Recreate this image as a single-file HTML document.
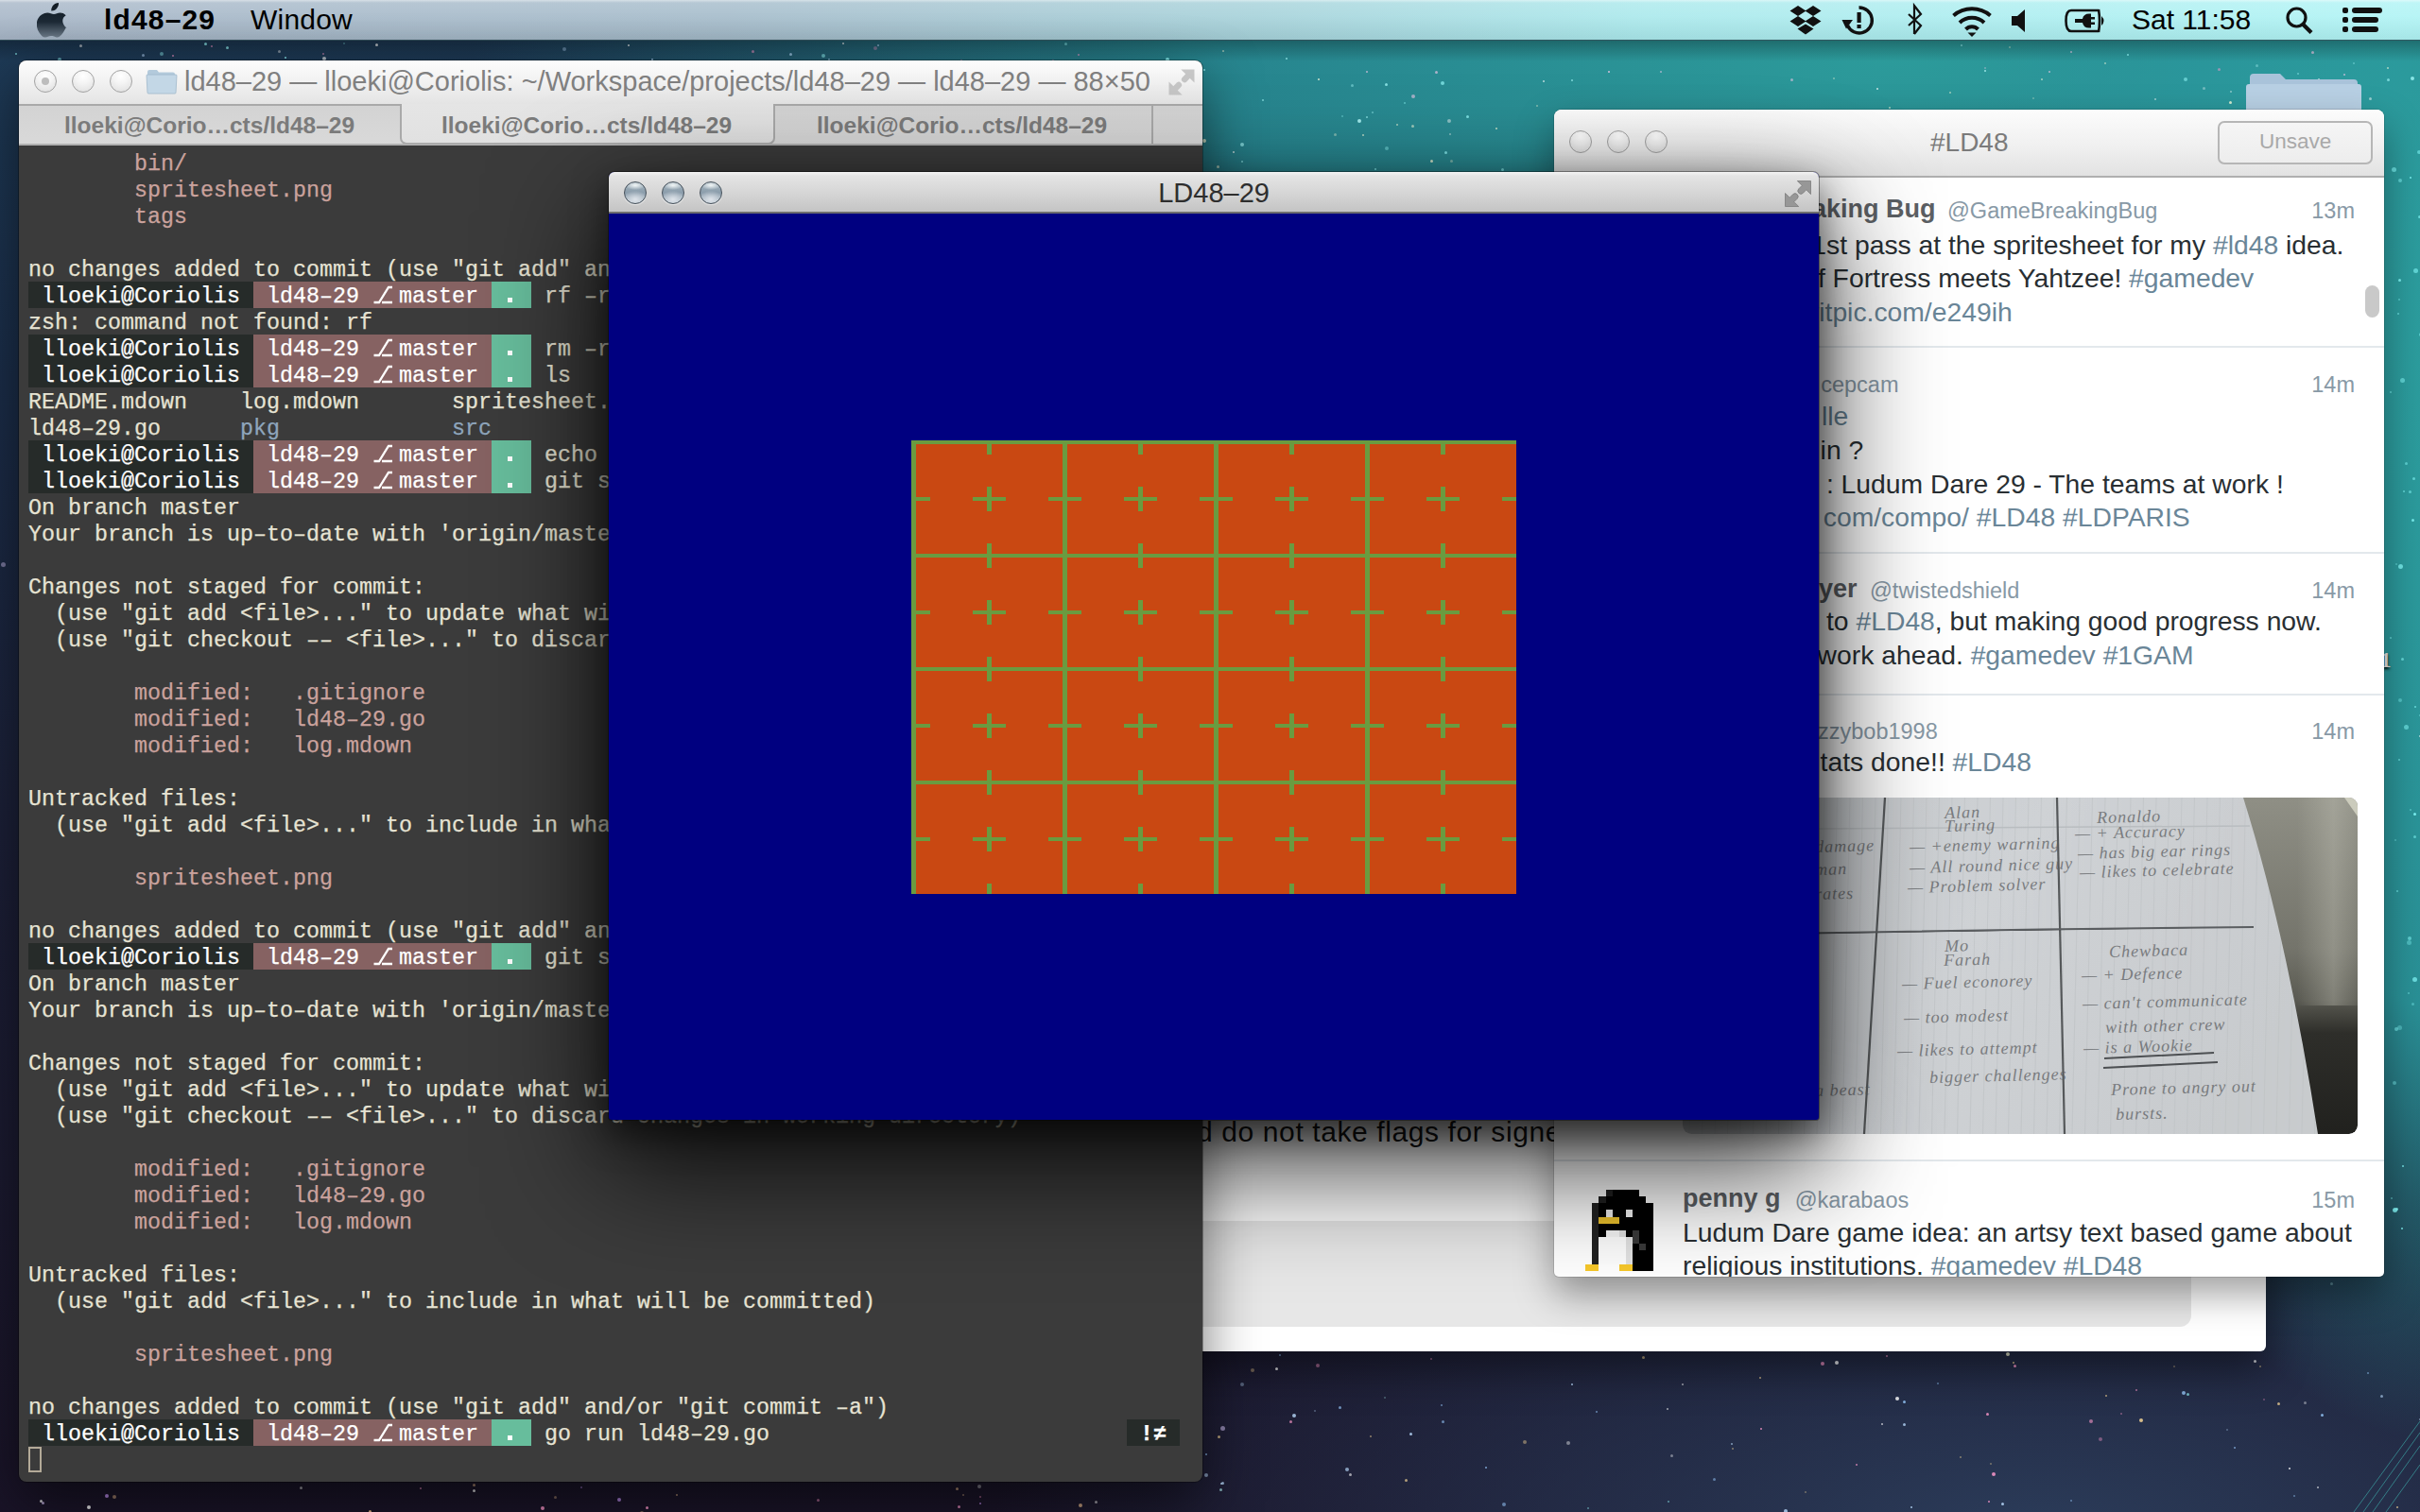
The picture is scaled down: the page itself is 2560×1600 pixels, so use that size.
<!DOCTYPE html><html><head><meta charset="utf-8"><style>
*{margin:0;padding:0;box-sizing:border-box}
html,body{width:2560px;height:1600px;overflow:hidden;background:#1b1a2c}
body{position:relative;font-family:"Liberation Sans",sans-serif}
.abs{position:absolute}
.t{position:absolute;white-space:nowrap;line-height:1}
#desk{position:absolute;left:0;top:0;width:2560px;height:1600px;
 background:
  radial-gradient(ellipse 520px 1150px at 2600px 380px, rgba(44,158,158,1) 0%, rgba(42,150,155,0.95) 60%, rgba(35,110,130,0) 100%),
  radial-gradient(ellipse 1100px 380px at 2150px 1620px, rgba(44,62,92,0.95) 0%, rgba(40,55,85,0.6) 50%, rgba(35,45,75,0) 100%),
  radial-gradient(ellipse 1500px 420px at 2000px 60px, rgba(44,155,155,1) 0%, rgba(40,140,148,0.9) 50%, rgba(32,100,120,0) 100%),
  linear-gradient(180deg, #1e3c58 0%, #1b2e4a 25%, #1c2038 55%, #1a1428 100%);
}
#menubar{position:absolute;left:0;top:0;width:2560px;height:43px;
 background:linear-gradient(90deg,#a8b7c8 0%,#a5bccb 30%,#a6d2da 52%,#aae9ec 68%,#b0f4f5 100%);
 border-bottom:1px solid rgba(10,40,50,0.75)}
#menubar .hl{position:absolute;left:0;top:0;width:100%;height:42px;background:linear-gradient(180deg,rgba(255,255,255,0.55) 0px,rgba(255,255,255,0.18) 3px,rgba(255,255,255,0.1) 40%,rgba(0,0,0,0.06) 100%)}
.win{position:absolute;overflow:hidden}
.tl{position:absolute;width:24px;height:24px;border-radius:50%;
 background:radial-gradient(circle at 50% 25%, #ffffff 0%, #f4f4f4 40%, #dcdcdc 100%);
 border:1.5px solid #a2a2a2}
.term{font-family:"Liberation Mono",monospace;font-size:23.33px;color:#e6e3d3;-webkit-text-stroke:0.25px currentColor}
.row{position:absolute;left:10px;height:28px;line-height:28px;white-space:pre}
.pk{color:#caa29d}
.bl{color:#8fa6bd}
.wh{color:#fff}
.nm{font-weight:bold;color:#5c6064}
.hd{color:#8899a6}
.lk{color:#6a8698}
.sep{position:absolute;height:2px;background:#e3e8ec}
</style></head><body>
<div id="desk"></div>
<div><div class="abs" style="left:1852px;top:1189px;width:5.0px;height:5.0px;border-radius:50%;background:#ffd;opacity:0.55"></div><div class="abs" style="left:2405px;top:431px;width:2px;height:2px;border-radius:50%;background:#dcf;opacity:0.56"></div><div class="abs" style="left:2514px;top:424px;width:2px;height:2px;border-radius:50%;background:#ffd;opacity:0.47"></div><div class="abs" style="left:371px;top:1146px;width:5.0px;height:5.0px;border-radius:50%;background:#f9c;opacity:0.65"></div><div class="abs" style="left:2438px;top:854px;width:3.0px;height:3.0px;border-radius:50%;background:#f9c;opacity:0.71"></div><div class="abs" style="left:645px;top:1319px;width:2px;height:2px;border-radius:50%;background:#dcf;opacity:0.33"></div><div class="abs" style="left:146px;top:432px;width:2px;height:2px;border-radius:50%;background:#dcf;opacity:0.32"></div><div class="abs" style="left:1900px;top:711px;width:3.0px;height:3.0px;border-radius:50%;background:#dcf;opacity:0.76"></div><div class="abs" style="left:2126px;top:521px;width:4px;height:4px;border-radius:50%;background:#fff;opacity:0.57"></div><div class="abs" style="left:348px;top:979px;width:4px;height:4px;border-radius:50%;background:#fff;opacity:0.52"></div><div class="abs" style="left:2257px;top:213px;width:4px;height:4px;border-radius:50%;background:#fff;opacity:0.47"></div><div class="abs" style="left:940px;top:1093px;width:2px;height:2px;border-radius:50%;background:#bff;opacity:0.34"></div><div class="abs" style="left:442px;top:863px;width:2px;height:2px;border-radius:50%;background:#fff;opacity:0.51"></div><div class="abs" style="left:69px;top:1445px;width:2px;height:2px;border-radius:50%;background:#9ff;opacity:0.42"></div><div class="abs" style="left:214px;top:1005px;width:3.0px;height:3.0px;border-radius:50%;background:#f9c;opacity:0.52"></div><div class="abs" style="left:299px;top:1202px;width:4px;height:4px;border-radius:50%;background:#9ff;opacity:0.73"></div><div class="abs" style="left:1105px;top:732px;width:2px;height:2px;border-radius:50%;background:#fff;opacity:0.48"></div><div class="abs" style="left:1679px;top:1595px;width:2px;height:2px;border-radius:50%;background:#9ff;opacity:0.44"></div><div class="abs" style="left:413px;top:65px;width:2px;height:2px;border-radius:50%;background:#ffd;opacity:0.74"></div><div class="abs" style="left:727px;top:1439px;width:3.0px;height:3.0px;border-radius:50%;background:#9ff;opacity:0.55"></div><div class="abs" style="left:781px;top:1541px;width:5.0px;height:5.0px;border-radius:50%;background:#9ff;opacity:0.53"></div><div class="abs" style="left:1571px;top:281px;width:3.0px;height:3.0px;border-radius:50%;background:#ffd;opacity:0.84"></div><div class="abs" style="left:1px;top:595px;width:5.0px;height:5.0px;border-radius:50%;background:#dcf;opacity:0.47"></div><div class="abs" style="left:80px;top:474px;width:2px;height:2px;border-radius:50%;background:#ffd;opacity:0.85"></div><div class="abs" style="left:2465px;top:1357px;width:3.0px;height:3.0px;border-radius:50%;background:#bff;opacity:0.32"></div><div class="abs" style="left:599px;top:479px;width:3.0px;height:3.0px;border-radius:50%;background:#fff;opacity:0.31"></div><div class="abs" style="left:2499px;top:716px;width:5.0px;height:5.0px;border-radius:50%;background:#fff;opacity:0.51"></div><div class="abs" style="left:304px;top:227px;width:2px;height:2px;border-radius:50%;background:#dcf;opacity:0.65"></div><div class="abs" style="left:63px;top:1274px;width:2px;height:2px;border-radius:50%;background:#fff;opacity:0.64"></div><div class="abs" style="left:521px;top:1245px;width:3.0px;height:3.0px;border-radius:50%;background:#dcf;opacity:0.37"></div><div class="abs" style="left:1581px;top:417px;width:4px;height:4px;border-radius:50%;background:#9ff;opacity:0.47"></div><div class="abs" style="left:935px;top:1293px;width:2px;height:2px;border-radius:50%;background:#f9c;opacity:0.40"></div><div class="abs" style="left:2268px;top:445px;width:4px;height:4px;border-radius:50%;background:#ffd;opacity:0.79"></div><div class="abs" style="left:2472px;top:203px;width:3.0px;height:3.0px;border-radius:50%;background:#bff;opacity:0.36"></div><div class="abs" style="left:158px;top:1092px;width:2px;height:2px;border-radius:50%;background:#9ff;opacity:0.71"></div><div class="abs" style="left:1604px;top:569px;width:3.0px;height:3.0px;border-radius:50%;background:#dcf;opacity:0.57"></div><div class="abs" style="left:2130px;top:402px;width:4px;height:4px;border-radius:50%;background:#bff;opacity:0.37"></div><div class="abs" style="left:1963px;top:1188px;width:4px;height:4px;border-radius:50%;background:#dcf;opacity:0.64"></div><div class="abs" style="left:1147px;top:477px;width:2px;height:2px;border-radius:50%;background:#f9c;opacity:0.31"></div><div class="abs" style="left:1102px;top:885px;width:3.0px;height:3.0px;border-radius:50%;background:#9ff;opacity:0.33"></div><div class="abs" style="left:721px;top:620px;width:2px;height:2px;border-radius:50%;background:#dcf;opacity:0.61"></div><div class="abs" style="left:538px;top:231px;width:2px;height:2px;border-radius:50%;background:#9ff;opacity:0.79"></div><div class="abs" style="left:1355px;top:1388px;width:4px;height:4px;border-radius:50%;background:#f9c;opacity:0.59"></div><div class="abs" style="left:574px;top:1251px;width:2px;height:2px;border-radius:50%;background:#bff;opacity:0.56"></div><div class="abs" style="left:1464px;top:1478px;width:2px;height:2px;border-radius:50%;background:#bff;opacity:0.31"></div><div class="abs" style="left:306px;top:1030px;width:2px;height:2px;border-radius:50%;background:#f9c;opacity:0.47"></div><div class="abs" style="left:559px;top:191px;width:2px;height:2px;border-radius:50%;background:#ffd;opacity:0.60"></div><div class="abs" style="left:182px;top:1552px;width:4px;height:4px;border-radius:50%;background:#f9c;opacity:0.37"></div><div class="abs" style="left:1399px;top:763px;width:2px;height:2px;border-radius:50%;background:#f9c;opacity:0.56"></div><div class="abs" style="left:318px;top:897px;width:5.0px;height:5.0px;border-radius:50%;background:#bff;opacity:0.77"></div><div class="abs" style="left:2346px;top:72px;width:3.0px;height:3.0px;border-radius:50%;background:#f9c;opacity:0.51"></div><div class="abs" style="left:2386px;top:68px;width:3.0px;height:3.0px;border-radius:50%;background:#bff;opacity:0.34"></div><div class="abs" style="left:473px;top:569px;width:3.0px;height:3.0px;border-radius:50%;background:#f9c;opacity:0.48"></div><div class="abs" style="left:2379px;top:980px;width:3.0px;height:3.0px;border-radius:50%;background:#ffd;opacity:0.76"></div><div class="abs" style="left:343px;top:1105px;width:5.0px;height:5.0px;border-radius:50%;background:#dcf;opacity:0.32"></div><div class="abs" style="left:2462px;top:222px;width:3.0px;height:3.0px;border-radius:50%;background:#bff;opacity:0.43"></div><div class="abs" style="left:462px;top:1061px;width:5.0px;height:5.0px;border-radius:50%;background:#dcf;opacity:0.66"></div><div class="abs" style="left:1991px;top:566px;width:2px;height:2px;border-radius:50%;background:#fff;opacity:0.47"></div><div class="abs" style="left:2505px;top:457px;width:3.0px;height:3.0px;border-radius:50%;background:#9ff;opacity:0.71"></div><div class="abs" style="left:1402px;top:1394px;width:3.0px;height:3.0px;border-radius:50%;background:#ffd;opacity:0.79"></div><div class="abs" style="left:1339px;top:871px;width:4px;height:4px;border-radius:50%;background:#fff;opacity:0.41"></div><div class="abs" style="left:1764px;top:1588px;width:2px;height:2px;border-radius:50%;background:#9ff;opacity:0.51"></div><div class="abs" style="left:2388px;top:691px;width:2px;height:2px;border-radius:50%;background:#9ff;opacity:0.37"></div><div class="abs" style="left:1436px;top:126px;width:4px;height:4px;border-radius:50%;background:#bff;opacity:0.82"></div><div class="abs" style="left:1133px;top:389px;width:2px;height:2px;border-radius:50%;background:#ffd;opacity:0.56"></div><div class="abs" style="left:876px;top:890px;width:3.0px;height:3.0px;border-radius:50%;background:#f9c;opacity:0.59"></div><div class="abs" style="left:1291px;top:1509px;width:5.0px;height:5.0px;border-radius:50%;background:#dcf;opacity:0.55"></div><div class="abs" style="left:305px;top:107px;width:2px;height:2px;border-radius:50%;background:#dcf;opacity:0.32"></div><div class="abs" style="left:1151px;top:1211px;width:2px;height:2px;border-radius:50%;background:#fff;opacity:0.66"></div><div class="abs" style="left:2310px;top:82px;width:4px;height:4px;border-radius:50%;background:#9ff;opacity:0.52"></div><div class="abs" style="left:777px;top:93px;width:5.0px;height:5.0px;border-radius:50%;background:#fff;opacity:0.43"></div><div class="abs" style="left:577px;top:139px;width:4px;height:4px;border-radius:50%;background:#bff;opacity:0.55"></div><div class="abs" style="left:2192px;top:1384px;width:4px;height:4px;border-radius:50%;background:#fff;opacity:0.83"></div><div class="abs" style="left:811px;top:451px;width:5.0px;height:5.0px;border-radius:50%;background:#ffd;opacity:0.44"></div><div class="abs" style="left:44px;top:1589px;width:3.0px;height:3.0px;border-radius:50%;background:#dcf;opacity:0.69"></div><div class="abs" style="left:733px;top:506px;width:2px;height:2px;border-radius:50%;background:#fff;opacity:0.60"></div><div class="abs" style="left:2131px;top:1067px;width:3.0px;height:3.0px;border-radius:50%;background:#9ff;opacity:0.52"></div><div class="abs" style="left:917px;top:221px;width:3.0px;height:3.0px;border-radius:50%;background:#f9c;opacity:0.51"></div><div class="abs" style="left:1845px;top:971px;width:2px;height:2px;border-radius:50%;background:#f9c;opacity:0.79"></div><div class="abs" style="left:27px;top:814px;width:3.0px;height:3.0px;border-radius:50%;background:#dcf;opacity:0.66"></div><div class="abs" style="left:2058px;top:745px;width:3.0px;height:3.0px;border-radius:50%;background:#fff;opacity:0.66"></div><div class="abs" style="left:839px;top:245px;width:4px;height:4px;border-radius:50%;background:#f9c;opacity:0.81"></div><div class="abs" style="left:505px;top:479px;width:2px;height:2px;border-radius:50%;background:#ffd;opacity:0.84"></div><div class="abs" style="left:1269px;top:1142px;width:5.0px;height:5.0px;border-radius:50%;background:#fff;opacity:0.44"></div><div class="abs" style="left:64px;top:756px;width:3.0px;height:3.0px;border-radius:50%;background:#bff;opacity:0.32"></div><div class="abs" style="left:1401px;top:1170px;width:3.0px;height:3.0px;border-radius:50%;background:#fff;opacity:0.57"></div><div class="abs" style="left:116px;top:490px;width:5.0px;height:5.0px;border-radius:50%;background:#bff;opacity:0.54"></div><div class="abs" style="left:143px;top:397px;width:3.0px;height:3.0px;border-radius:50%;background:#fff;opacity:0.68"></div><div class="abs" style="left:575px;top:1006px;width:2px;height:2px;border-radius:50%;background:#dcf;opacity:0.80"></div><div class="abs" style="left:2122px;top:1431px;width:4px;height:4px;border-radius:50%;background:#ffd;opacity:0.82"></div><div class="abs" style="left:2017px;top:1228px;width:4px;height:4px;border-radius:50%;background:#bff;opacity:0.72"></div><div class="abs" style="left:1799px;top:1121px;width:3.0px;height:3.0px;border-radius:50%;background:#fff;opacity:0.76"></div><div class="abs" style="left:2300px;top:1351px;width:2px;height:2px;border-radius:50%;background:#dcf;opacity:0.58"></div><div class="abs" style="left:2293px;top:568px;width:2px;height:2px;border-radius:50%;background:#f9c;opacity:0.51"></div><div class="abs" style="left:2496px;top:469px;width:2px;height:2px;border-radius:50%;background:#9ff;opacity:0.83"></div><div class="abs" style="left:2147px;top:602px;width:3.0px;height:3.0px;border-radius:50%;background:#ffd;opacity:0.41"></div><div class="abs" style="left:2195px;top:277px;width:3.0px;height:3.0px;border-radius:50%;background:#bff;opacity:0.63"></div><div class="abs" style="left:113px;top:1145px;width:2px;height:2px;border-radius:50%;background:#dcf;opacity:0.80"></div><div class="abs" style="left:2228px;top:1195px;width:2px;height:2px;border-radius:50%;background:#ffd;opacity:0.35"></div><div class="abs" style="left:683px;top:177px;width:3.0px;height:3.0px;border-radius:50%;background:#ffd;opacity:0.53"></div><div class="abs" style="left:1655px;top:594px;width:2px;height:2px;border-radius:50%;background:#ffd;opacity:0.57"></div><div class="abs" style="left:1391px;top:931px;width:5.0px;height:5.0px;border-radius:50%;background:#ffd;opacity:0.59"></div><div class="abs" style="left:444px;top:435px;width:3.0px;height:3.0px;border-radius:50%;background:#dcf;opacity:0.32"></div><div class="abs" style="left:1065px;top:308px;width:4px;height:4px;border-radius:50%;background:#bff;opacity:0.32"></div><div class="abs" style="left:637px;top:508px;width:2px;height:2px;border-radius:50%;background:#f9c;opacity:0.46"></div><div class="abs" style="left:1455px;top:543px;width:3.0px;height:3.0px;border-radius:50%;background:#ffd;opacity:0.36"></div><div class="abs" style="left:2384px;top:294px;width:5.0px;height:5.0px;border-radius:50%;background:#dcf;opacity:0.64"></div><div class="abs" style="left:809px;top:1479px;width:3.0px;height:3.0px;border-radius:50%;background:#ffd;opacity:0.31"></div><div class="abs" style="left:1693px;top:1127px;width:3.0px;height:3.0px;border-radius:50%;background:#9ff;opacity:0.60"></div><div class="abs" style="left:2187px;top:1350px;width:2px;height:2px;border-radius:50%;background:#dcf;opacity:0.42"></div><div class="abs" style="left:2223px;top:1295px;width:3.0px;height:3.0px;border-radius:50%;background:#9ff;opacity:0.43"></div><div class="abs" style="left:1423px;top:413px;width:2px;height:2px;border-radius:50%;background:#dcf;opacity:0.47"></div><div class="abs" style="left:797px;top:489px;width:5.0px;height:5.0px;border-radius:50%;background:#9ff;opacity:0.79"></div><div class="abs" style="left:548px;top:533px;width:2px;height:2px;border-radius:50%;background:#f9c;opacity:0.35"></div><div class="abs" style="left:1588px;top:241px;width:3.0px;height:3.0px;border-radius:50%;background:#ffd;opacity:0.60"></div><div class="abs" style="left:516px;top:453px;width:3.0px;height:3.0px;border-radius:50%;background:#f9c;opacity:0.68"></div><div class="abs" style="left:72px;top:239px;width:2px;height:2px;border-radius:50%;background:#dcf;opacity:0.68"></div><div class="abs" style="left:1479px;top:279px;width:4px;height:4px;border-radius:50%;background:#dcf;opacity:0.65"></div><div class="abs" style="left:1406px;top:1072px;width:4px;height:4px;border-radius:50%;background:#9ff;opacity:0.74"></div><div class="abs" style="left:1974px;top:260px;width:2px;height:2px;border-radius:50%;background:#bff;opacity:0.72"></div><div class="abs" style="left:2512px;top:1097px;width:3.0px;height:3.0px;border-radius:50%;background:#ffd;opacity:0.38"></div><div class="abs" style="left:755px;top:278px;width:2px;height:2px;border-radius:50%;background:#9ff;opacity:0.76"></div><div class="abs" style="left:1159px;top:1421px;width:2px;height:2px;border-radius:50%;background:#dcf;opacity:0.33"></div><div class="abs" style="left:1892px;top:201px;width:5.0px;height:5.0px;border-radius:50%;background:#bff;opacity:0.48"></div><div class="abs" style="left:1912px;top:916px;width:3.0px;height:3.0px;border-radius:50%;background:#fff;opacity:0.54"></div><div class="abs" style="left:2461px;top:807px;width:2px;height:2px;border-radius:50%;background:#f9c;opacity:0.69"></div><div class="abs" style="left:820px;top:414px;width:3.0px;height:3.0px;border-radius:50%;background:#ffd;opacity:0.50"></div><div class="abs" style="left:1516px;top:873px;width:2px;height:2px;border-radius:50%;background:#dcf;opacity:0.39"></div><div class="abs" style="left:2099px;top:74px;width:2px;height:2px;border-radius:50%;background:#bff;opacity:0.74"></div><div class="abs" style="left:1656px;top:1209px;width:3.0px;height:3.0px;border-radius:50%;background:#9ff;opacity:0.58"></div><div class="abs" style="left:1396px;top:571px;width:2px;height:2px;border-radius:50%;background:#bff;opacity:0.71"></div><div class="abs" style="left:655px;top:873px;width:2px;height:2px;border-radius:50%;background:#fff;opacity:0.78"></div><div class="abs" style="left:1514px;top:927px;width:5.0px;height:5.0px;border-radius:50%;background:#9ff;opacity:0.52"></div><div class="abs" style="left:757px;top:187px;width:5.0px;height:5.0px;border-radius:50%;background:#fff;opacity:0.47"></div><div class="abs" style="left:413px;top:64px;width:2px;height:2px;border-radius:50%;background:#f9c;opacity:0.80"></div><div class="abs" style="left:203px;top:518px;width:2px;height:2px;border-radius:50%;background:#f9c;opacity:0.46"></div><div class="abs" style="left:884px;top:1394px;width:3.0px;height:3.0px;border-radius:50%;background:#dcf;opacity:0.40"></div><div class="abs" style="left:314px;top:840px;width:3.0px;height:3.0px;border-radius:50%;background:#ffd;opacity:0.65"></div><div class="abs" style="left:489px;top:852px;width:3.0px;height:3.0px;border-radius:50%;background:#bff;opacity:0.36"></div><div class="abs" style="left:442px;top:1556px;width:2px;height:2px;border-radius:50%;background:#fff;opacity:0.54"></div><div class="abs" style="left:2067px;top:146px;width:5.0px;height:5.0px;border-radius:50%;background:#9ff;opacity:0.66"></div><div class="abs" style="left:44px;top:244px;width:2px;height:2px;border-radius:50%;background:#fff;opacity:0.45"></div><div class="abs" style="left:1396px;top:1169px;width:3.0px;height:3.0px;border-radius:50%;background:#dcf;opacity:0.53"></div><div class="abs" style="left:2132px;top:1206px;width:5.0px;height:5.0px;border-radius:50%;background:#bff;opacity:0.65"></div><div class="abs" style="left:312px;top:1168px;width:3.0px;height:3.0px;border-radius:50%;background:#f9c;opacity:0.72"></div><div class="abs" style="left:184px;top:834px;width:2px;height:2px;border-radius:50%;background:#ffd;opacity:0.56"></div><div class="abs" style="left:692px;top:1057px;width:3.0px;height:3.0px;border-radius:50%;background:#dcf;opacity:0.63"></div><div class="abs" style="left:1759px;top:1055px;width:3.0px;height:3.0px;border-radius:50%;background:#fff;opacity:0.59"></div><div class="abs" style="left:2448px;top:682px;width:2px;height:2px;border-radius:50%;background:#dcf;opacity:0.46"></div><div class="abs" style="left:1104px;top:1191px;width:2px;height:2px;border-radius:50%;background:#f9c;opacity:0.69"></div><div class="abs" style="left:1212px;top:98px;width:2px;height:2px;border-radius:50%;background:#9ff;opacity:0.62"></div><div class="abs" style="left:641px;top:880px;width:5.0px;height:5.0px;border-radius:50%;background:#f9c;opacity:0.51"></div><div class="abs" style="left:1290px;top:1575px;width:3.0px;height:3.0px;border-radius:50%;background:#bff;opacity:0.62"></div><div class="abs" style="left:1307px;top:193px;width:5.0px;height:5.0px;border-radius:50%;background:#9ff;opacity:0.54"></div><div class="abs" style="left:1956px;top:556px;width:5.0px;height:5.0px;border-radius:50%;background:#9ff;opacity:0.32"></div><div class="abs" style="left:403px;top:1523px;width:3.0px;height:3.0px;border-radius:50%;background:#9ff;opacity:0.84"></div><div class="abs" style="left:1004px;top:1279px;width:4px;height:4px;border-radius:50%;background:#bff;opacity:0.33"></div><div class="abs" style="left:1708px;top:976px;width:2px;height:2px;border-radius:50%;background:#9ff;opacity:0.77"></div><div class="abs" style="left:1461px;top:1124px;width:2px;height:2px;border-radius:50%;background:#bff;opacity:0.50"></div><div class="abs" style="left:572px;top:1410px;width:3.0px;height:3.0px;border-radius:50%;background:#ffd;opacity:0.63"></div><div class="abs" style="left:2384px;top:1439px;width:3.0px;height:3.0px;border-radius:50%;background:#fff;opacity:0.73"></div><div class="abs" style="left:2174px;top:323px;width:2px;height:2px;border-radius:50%;background:#f9c;opacity:0.37"></div><div class="abs" style="left:1970px;top:276px;width:3.0px;height:3.0px;border-radius:50%;background:#fff;opacity:0.73"></div><div class="abs" style="left:2559px;top:778px;width:2px;height:2px;border-radius:50%;background:#fff;opacity:0.64"></div><div class="abs" style="left:2313px;top:1474px;width:3.0px;height:3.0px;border-radius:50%;background:#9ff;opacity:0.65"></div><div class="abs" style="left:980px;top:431px;width:2px;height:2px;border-radius:50%;background:#dcf;opacity:0.84"></div><div class="abs" style="left:802px;top:1442px;width:2px;height:2px;border-radius:50%;background:#f9c;opacity:0.33"></div><div class="abs" style="left:1109px;top:574px;width:3.0px;height:3.0px;border-radius:50%;background:#bff;opacity:0.64"></div><div class="abs" style="left:419px;top:498px;width:3.0px;height:3.0px;border-radius:50%;background:#fff;opacity:0.34"></div><div class="abs" style="left:354px;top:1428px;width:2px;height:2px;border-radius:50%;background:#dcf;opacity:0.43"></div><div class="abs" style="left:1528px;top:1034px;width:3.0px;height:3.0px;border-radius:50%;background:#fff;opacity:0.42"></div><div class="abs" style="left:1407px;top:1055px;width:4px;height:4px;border-radius:50%;background:#9ff;opacity:0.76"></div><div class="abs" style="left:304px;top:288px;width:3.0px;height:3.0px;border-radius:50%;background:#dcf;opacity:0.76"></div><div class="abs" style="left:873px;top:953px;width:3.0px;height:3.0px;border-radius:50%;background:#f9c;opacity:0.44"></div><div class="abs" style="left:617px;top:798px;width:2px;height:2px;border-radius:50%;background:#f9c;opacity:0.76"></div><div class="abs" style="left:2443px;top:709px;width:2px;height:2px;border-radius:50%;background:#dcf;opacity:0.72"></div><div class="abs" style="left:753px;top:918px;width:4px;height:4px;border-radius:50%;background:#fff;opacity:0.62"></div><div class="abs" style="left:1892px;top:706px;width:2px;height:2px;border-radius:50%;background:#dcf;opacity:0.35"></div><div class="abs" style="left:2311px;top:1206px;width:3.0px;height:3.0px;border-radius:50%;background:#f9c;opacity:0.55"></div><div class="abs" style="left:38px;top:198px;width:2px;height:2px;border-radius:50%;background:#9ff;opacity:0.80"></div><div class="abs" style="left:2472px;top:210px;width:4px;height:4px;border-radius:50%;background:#fff;opacity:0.57"></div><div class="abs" style="left:1343px;top:622px;width:2px;height:2px;border-radius:50%;background:#9ff;opacity:0.50"></div><div class="abs" style="left:1339px;top:793px;width:2px;height:2px;border-radius:50%;background:#fff;opacity:0.69"></div><div class="abs" style="left:2331px;top:1261px;width:4px;height:4px;border-radius:50%;background:#fff;opacity:0.54"></div><div class="abs" style="left:1248px;top:981px;width:2px;height:2px;border-radius:50%;background:#9ff;opacity:0.52"></div><div class="abs" style="left:2114px;top:551px;width:2px;height:2px;border-radius:50%;background:#fff;opacity:0.76"></div><div class="abs" style="left:98px;top:787px;width:4px;height:4px;border-radius:50%;background:#ffd;opacity:0.62"></div><div class="abs" style="left:798px;top:1556px;width:3.0px;height:3.0px;border-radius:50%;background:#fff;opacity:0.74"></div><div class="abs" style="left:2214px;top:360px;width:5.0px;height:5.0px;border-radius:50%;background:#dcf;opacity:0.61"></div><div class="abs" style="left:723px;top:226px;width:5.0px;height:5.0px;border-radius:50%;background:#ffd;opacity:0.78"></div><div class="abs" style="left:1152px;top:88px;width:2px;height:2px;border-radius:50%;background:#dcf;opacity:0.33"></div><div class="abs" style="left:649px;top:1205px;width:2px;height:2px;border-radius:50%;background:#bff;opacity:0.66"></div><div class="abs" style="left:1731px;top:174px;width:3.0px;height:3.0px;border-radius:50%;background:#dcf;opacity:0.47"></div><div class="abs" style="left:2234px;top:215px;width:2px;height:2px;border-radius:50%;background:#bff;opacity:0.45"></div><div class="abs" style="left:431px;top:685px;width:2px;height:2px;border-radius:50%;background:#bff;opacity:0.65"></div><div class="abs" style="left:589px;top:242px;width:4px;height:4px;border-radius:50%;background:#f9c;opacity:0.53"></div><div class="abs" style="left:902px;top:1044px;width:5.0px;height:5.0px;border-radius:50%;background:#dcf;opacity:0.49"></div><div class="abs" style="left:1880px;top:850px;width:2px;height:2px;border-radius:50%;background:#fff;opacity:0.74"></div><div class="abs" style="left:1363px;top:1420px;width:2px;height:2px;border-radius:50%;background:#ffd;opacity:0.57"></div><div class="abs" style="left:296px;top:1493px;width:3.0px;height:3.0px;border-radius:50%;background:#bff;opacity:0.53"></div></div>
<div><div class="abs" style="left:2546px;top:995px;width:5.0px;height:5.0px;border-radius:50%;background:#8ff;opacity:0.36"></div><div class="abs" style="left:2541px;top:1233px;width:2px;height:2px;border-radius:50%;background:#8ff;opacity:0.80"></div><div class="abs" style="left:2528px;top:674px;width:2px;height:2px;border-radius:50%;background:#8ff;opacity:0.54"></div><div class="abs" style="left:2528px;top:414px;width:2px;height:2px;border-radius:50%;background:#8ff;opacity:0.55"></div><div class="abs" style="left:2531px;top:1144px;width:4px;height:4px;border-radius:50%;background:#8ff;opacity:0.43"></div><div class="abs" style="left:2553px;top:284px;width:5.0px;height:5.0px;border-radius:50%;background:#8ff;opacity:0.57"></div><div class="abs" style="left:2529px;top:1267px;width:2px;height:2px;border-radius:50%;background:#8ff;opacity:0.45"></div><div class="abs" style="left:2532px;top:1279px;width:2px;height:2px;border-radius:50%;background:#8ff;opacity:0.49"></div><div class="abs" style="left:2559px;top:756px;width:2px;height:2px;border-radius:50%;background:#8ff;opacity:0.44"></div><div class="abs" style="left:2559px;top:352px;width:4px;height:4px;border-radius:50%;background:#8ff;opacity:0.50"></div><div class="abs" style="left:2537px;top:316px;width:2px;height:2px;border-radius:50%;background:#8ff;opacity:0.48"></div><div class="abs" style="left:2536px;top:1085px;width:5.0px;height:5.0px;border-radius:50%;background:#8ff;opacity:0.35"></div><div class="abs" style="left:2548px;top:519px;width:3.0px;height:3.0px;border-radius:50%;background:#8ff;opacity:0.53"></div><div class="abs" style="left:2535px;top:942px;width:2px;height:2px;border-radius:50%;background:#8ff;opacity:0.59"></div><div class="abs" style="left:2549px;top:187px;width:2px;height:2px;border-radius:50%;background:#8ff;opacity:0.82"></div><div class="abs" style="left:2537px;top:597px;width:5.0px;height:5.0px;border-radius:50%;background:#8ff;opacity:0.74"></div><div class="abs" style="left:2537px;top:803px;width:2px;height:2px;border-radius:50%;background:#8ff;opacity:0.58"></div><div class="abs" style="left:2549px;top:856px;width:2px;height:2px;border-radius:50%;background:#8ff;opacity:0.41"></div><div class="abs" style="left:2533px;top:1087px;width:4px;height:4px;border-radius:50%;background:#8ff;opacity:0.52"></div><div class="abs" style="left:2537px;top:739px;width:4px;height:4px;border-radius:50%;background:#8ff;opacity:0.40"></div><div class="abs" style="left:2551px;top:1061px;width:3.0px;height:3.0px;border-radius:50%;background:#8ff;opacity:0.37"></div><div class="abs" style="left:2558px;top:228px;width:3.0px;height:3.0px;border-radius:50%;background:#8ff;opacity:0.61"></div><div class="abs" style="left:2537px;top:295px;width:3.0px;height:3.0px;border-radius:50%;background:#8ff;opacity:0.81"></div><div class="abs" style="left:2544px;top:489px;width:3.0px;height:3.0px;border-radius:50%;background:#8ff;opacity:0.50"></div><div class="abs" style="left:2553px;top:860px;width:3.0px;height:3.0px;border-radius:50%;background:#8ff;opacity:0.85"></div><div class="abs" style="left:2530px;top:177px;width:5.0px;height:5.0px;border-radius:50%;background:#8ff;opacity:0.62"></div><div class="abs" style="left:2539px;top:400px;width:5.0px;height:5.0px;border-radius:50%;background:#8ff;opacity:0.52"></div><div class="abs" style="left:2533px;top:888px;width:2px;height:2px;border-radius:50%;background:#8ff;opacity:0.38"></div><div class="abs" style="left:2557px;top:159px;width:4px;height:4px;border-radius:50%;background:#8ff;opacity:0.52"></div><div class="abs" style="left:2531px;top:1278px;width:5.0px;height:5.0px;border-radius:50%;background:#8ff;opacity:0.82"></div><div class="abs" style="left:2547px;top:1050px;width:2px;height:2px;border-radius:50%;background:#8ff;opacity:0.43"></div><div class="abs" style="left:2537px;top:189px;width:4px;height:4px;border-radius:50%;background:#8ff;opacity:0.50"></div><div class="abs" style="left:2540px;top:1299px;width:2px;height:2px;border-radius:50%;background:#8ff;opacity:0.84"></div><div class="abs" style="left:2540px;top:696px;width:3.0px;height:3.0px;border-radius:50%;background:#8ff;opacity:0.59"></div><div class="abs" style="left:2534px;top:596px;width:2px;height:2px;border-radius:50%;background:#8ff;opacity:0.41"></div><div class="abs" style="left:2554px;top:747px;width:2px;height:2px;border-radius:50%;background:#8ff;opacity:0.66"></div><div class="abs" style="left:2542px;top:519px;width:2px;height:2px;border-radius:50%;background:#8ff;opacity:0.60"></div><div class="abs" style="left:2543px;top:767px;width:5.0px;height:5.0px;border-radius:50%;background:#8ff;opacity:0.53"></div><div class="abs" style="left:2552px;top:1034px;width:5.0px;height:5.0px;border-radius:50%;background:#8ff;opacity:0.68"></div><div class="abs" style="left:2551px;top:549px;width:3.0px;height:3.0px;border-radius:50%;background:#8ff;opacity:0.77"></div><div class="abs" style="left:2534px;top:1278px;width:3.0px;height:3.0px;border-radius:50%;background:#8ff;opacity:0.83"></div><div class="abs" style="left:2536px;top:331px;width:2px;height:2px;border-radius:50%;background:#8ff;opacity:0.59"></div><div class="abs" style="left:2552px;top:505px;width:3.0px;height:3.0px;border-radius:50%;background:#8ff;opacity:0.58"></div><div class="abs" style="left:2553px;top:884px;width:3.0px;height:3.0px;border-radius:50%;background:#8ff;opacity:0.52"></div><div class="abs" style="left:2547px;top:991px;width:4px;height:4px;border-radius:50%;background:#8ff;opacity:0.53"></div><div class="abs" style="left:2358px;top:107px;width:3.0px;height:3.0px;border-radius:50%;background:#ffd;opacity:0.79"></div><div class="abs" style="left:1939px;top:82px;width:2px;height:2px;border-radius:50%;background:#ffd;opacity:0.40"></div><div class="abs" style="left:2479px;top:78px;width:2px;height:2px;border-radius:50%;background:#fce;opacity:0.66"></div><div class="abs" style="left:1493px;top:100px;width:4px;height:4px;border-radius:50%;background:#fce;opacity:0.56"></div><div class="abs" style="left:1662px;top:84px;width:2px;height:2px;border-radius:50%;background:#aff;opacity:0.66"></div><div class="abs" style="left:1524px;top:86px;width:4px;height:4px;border-radius:50%;background:#9ff;opacity:0.63"></div><div class="abs" style="left:2250px;top:57px;width:2px;height:2px;border-radius:50%;background:#9ff;opacity:0.79"></div><div class="abs" style="left:1485px;top:108px;width:2px;height:2px;border-radius:50%;background:#9ff;opacity:0.46"></div><div class="abs" style="left:1894px;top:83px;width:3.0px;height:3.0px;border-radius:50%;background:#fce;opacity:0.53"></div><div class="abs" style="left:2125px;top:49px;width:2px;height:2px;border-radius:50%;background:#ffd;opacity:0.42"></div><div class="abs" style="left:1273px;top:73px;width:2px;height:2px;border-radius:50%;background:#aff;opacity:0.73"></div><div class="abs" style="left:2159px;top:83px;width:2px;height:2px;border-radius:50%;background:#ffd;opacity:0.57"></div><div class="abs" style="left:1394px;top:83px;width:2px;height:2px;border-radius:50%;background:#ffd;opacity:0.78"></div><div class="abs" style="left:2506px;top:103px;width:3.0px;height:3.0px;border-radius:50%;background:#fff;opacity:0.50"></div><div class="abs" style="left:2099px;top:71px;width:2px;height:2px;border-radius:50%;background:#fce;opacity:0.38"></div><div class="abs" style="left:1998px;top:113px;width:2px;height:2px;border-radius:50%;background:#ffd;opacity:0.60"></div><div class="abs" style="left:2330px;top:92px;width:3.0px;height:3.0px;border-radius:50%;background:#fff;opacity:0.35"></div><div class="abs" style="left:2452px;top:83px;width:2px;height:2px;border-radius:50%;background:#fff;opacity:0.61"></div><div class="abs" style="left:1756px;top:75px;width:2px;height:2px;border-radius:50%;background:#fce;opacity:0.55"></div><div class="abs" style="left:2525px;top:71px;width:2px;height:2px;border-radius:50%;background:#ffd;opacity:0.60"></div><div class="abs" style="left:2226px;top:66px;width:2px;height:2px;border-radius:50%;background:#ffd;opacity:0.51"></div><div class="abs" style="left:2489px;top:66px;width:2px;height:2px;border-radius:50%;background:#aff;opacity:0.37"></div><div class="abs" style="left:1429px;top:89px;width:3.0px;height:3.0px;border-radius:50%;background:#aff;opacity:0.42"></div><div class="abs" style="left:2279px;top:104px;width:2px;height:2px;border-radius:50%;background:#fff;opacity:0.54"></div><div class="abs" style="left:1625px;top:111px;width:2px;height:2px;border-radius:50%;background:#ffd;opacity:0.42"></div><div class="abs" style="left:2359px;top:96px;width:2px;height:2px;border-radius:50%;background:#fff;opacity:0.45"></div><div class="abs" style="left:2550px;top:81px;width:4px;height:4px;border-radius:50%;background:#aff;opacity:0.74"></div><div class="abs" style="left:1293px;top:53px;width:2px;height:2px;border-radius:50%;background:#ffd;opacity:0.57"></div><div class="abs" style="left:2062px;top:97px;width:2px;height:2px;border-radius:50%;background:#ffd;opacity:0.53"></div><div class="abs" style="left:2150px;top:103px;width:2px;height:2px;border-radius:50%;background:#ffd;opacity:0.32"></div><div class="abs" style="left:1985px;top:93px;width:2px;height:2px;border-radius:50%;background:#fff;opacity:0.74"></div><div class="abs" style="left:1518px;top:75px;width:3.0px;height:3.0px;border-radius:50%;background:#fce;opacity:0.60"></div><div class="abs" style="left:2378px;top:105px;width:3.0px;height:3.0px;border-radius:50%;background:#9ff;opacity:0.50"></div><div class="abs" style="left:2430px;top:77px;width:2px;height:2px;border-radius:50%;background:#aff;opacity:0.45"></div><div class="abs" style="left:2167px;top:75px;width:2px;height:2px;border-radius:50%;background:#fce;opacity:0.62"></div><div class="abs" style="left:2445px;top:54px;width:3.0px;height:3.0px;border-radius:50%;background:#fce;opacity:0.65"></div><div class="abs" style="left:2525px;top:83px;width:3.0px;height:3.0px;border-radius:50%;background:#aff;opacity:0.59"></div><div class="abs" style="left:1360px;top:61px;width:2px;height:2px;border-radius:50%;background:#aff;opacity:0.70"></div><div class="abs" style="left:1701px;top:75px;width:2px;height:2px;border-radius:50%;background:#fce;opacity:0.80"></div><div class="abs" style="left:1335px;top:105px;width:2px;height:2px;border-radius:50%;background:#aff;opacity:0.61"></div><div class="abs" style="left:2190px;top:54px;width:2px;height:2px;border-radius:50%;background:#fce;opacity:0.65"></div><div class="abs" style="left:1465px;top:88px;width:3.0px;height:3.0px;border-radius:50%;background:#aff;opacity:0.70"></div><div class="abs" style="left:2074px;top:47px;width:2px;height:2px;border-radius:50%;background:#aff;opacity:0.63"></div><div class="abs" style="left:1632px;top:85px;width:2px;height:2px;border-radius:50%;background:#fff;opacity:0.67"></div><div class="abs" style="left:1445px;top:75px;width:2px;height:2px;border-radius:50%;background:#fce;opacity:0.64"></div><div class="abs" style="left:1454px;top:178px;width:2px;height:2px;border-radius:50%;background:#9ff;opacity:0.76"></div><div class="abs" style="left:1531px;top:126px;width:4px;height:4px;border-radius:50%;background:#fff;opacity:0.45"></div><div class="abs" style="left:1477px;top:131px;width:2px;height:2px;border-radius:50%;background:#ffd;opacity:0.58"></div><div class="abs" style="left:1582px;top:135px;width:2px;height:2px;border-radius:50%;background:#ffd;opacity:0.70"></div><div class="abs" style="left:1441px;top:142px;width:2px;height:2px;border-radius:50%;background:#ffd;opacity:0.66"></div><div class="abs" style="left:1304px;top:160px;width:2px;height:2px;border-radius:50%;background:#fff;opacity:0.73"></div><div class="abs" style="left:1493px;top:132px;width:3.0px;height:3.0px;border-radius:50%;background:#ffd;opacity:0.54"></div><div class="abs" style="left:1312px;top:151px;width:4px;height:4px;border-radius:50%;background:#aff;opacity:0.66"></div><div class="abs" style="left:1588px;top:178px;width:3.0px;height:3.0px;border-radius:50%;background:#9ff;opacity:0.64"></div><div class="abs" style="left:1551px;top:122px;width:3.0px;height:3.0px;border-radius:50%;background:#9ff;opacity:0.71"></div><div class="abs" style="left:1533px;top:141px;width:2px;height:2px;border-radius:50%;background:#fff;opacity:0.44"></div><div class="abs" style="left:1534px;top:169px;width:3.0px;height:3.0px;border-radius:50%;background:#ffd;opacity:0.37"></div><div class="abs" style="left:1513px;top:169px;width:3.0px;height:3.0px;border-radius:50%;background:#ffd;opacity:0.78"></div><div class="abs" style="left:1465px;top:155px;width:4px;height:4px;border-radius:50%;background:#9ff;opacity:0.41"></div><div class="abs" style="left:1419px;top:122px;width:2px;height:2px;border-radius:50%;background:#9ff;opacity:0.39"></div><div class="abs" style="left:1287px;top:175px;width:3.0px;height:3.0px;border-radius:50%;background:#ffd;opacity:0.63"></div><div class="abs" style="left:1272px;top:147px;width:4px;height:4px;border-radius:50%;background:#ffd;opacity:0.76"></div><div class="abs" style="left:1445px;top:123px;width:2px;height:2px;border-radius:50%;background:#aff;opacity:0.63"></div><div class="abs" style="left:1411px;top:141px;width:3.0px;height:3.0px;border-radius:50%;background:#ffd;opacity:0.38"></div><div class="abs" style="left:1313px;top:170px;width:2px;height:2px;border-radius:50%;background:#aff;opacity:0.64"></div><div class="abs" style="left:1451px;top:118px;width:2px;height:2px;border-radius:50%;background:#aff;opacity:0.46"></div><div class="abs" style="left:1528px;top:160px;width:3.0px;height:3.0px;border-radius:50%;background:#9ff;opacity:0.72"></div><div class="abs" style="left:150px;top:57px;width:3.0px;height:3.0px;border-radius:50%;background:#bdf;opacity:0.58"></div><div class="abs" style="left:928px;top:47px;width:2px;height:2px;border-radius:50%;background:#bdf;opacity:0.71"></div><div class="abs" style="left:835px;top:56px;width:3.0px;height:3.0px;border-radius:50%;background:#bdf;opacity:0.69"></div><div class="abs" style="left:595px;top:50px;width:4px;height:4px;border-radius:50%;background:#bdf;opacity:0.43"></div><div class="abs" style="left:223px;top:48px;width:2px;height:2px;border-radius:50%;background:#f9c;opacity:0.67"></div><div class="abs" style="left:924px;top:49px;width:4px;height:4px;border-radius:50%;background:#f9c;opacity:0.38"></div><div class="abs" style="left:216px;top:45px;width:3.0px;height:3.0px;border-radius:50%;background:#9ff;opacity:0.82"></div><div class="abs" style="left:301px;top:60px;width:2px;height:2px;border-radius:50%;background:#9ff;opacity:0.82"></div><div class="abs" style="left:869px;top:57px;width:4px;height:4px;border-radius:50%;background:#9ff;opacity:0.55"></div><div class="abs" style="left:61px;top:61px;width:4px;height:4px;border-radius:50%;background:#9ff;opacity:0.50"></div><div class="abs" style="left:1113px;top:63px;width:2px;height:2px;border-radius:50%;background:#f9c;opacity:0.44"></div><div class="abs" style="left:239px;top:49px;width:3.0px;height:3.0px;border-radius:50%;background:#9ff;opacity:0.75"></div><div class="abs" style="left:689px;top:62px;width:2px;height:2px;border-radius:50%;background:#bdf;opacity:0.78"></div><div class="abs" style="left:795px;top:53px;width:3.0px;height:3.0px;border-radius:50%;background:#f9c;opacity:0.59"></div><div class="abs" style="left:664px;top:47px;width:2px;height:2px;border-radius:50%;background:#fff;opacity:0.81"></div><div class="abs" style="left:876px;top:62px;width:2px;height:2px;border-radius:50%;background:#bdf;opacity:0.63"></div><div class="abs" style="left:397px;top:46px;width:3.0px;height:3.0px;border-radius:50%;background:#fff;opacity:0.76"></div><div class="abs" style="left:169px;top:55px;width:4px;height:4px;border-radius:50%;background:#9ff;opacity:0.47"></div><div class="abs" style="left:1016px;top:63px;width:2px;height:2px;border-radius:50%;background:#f9c;opacity:0.49"></div><div class="abs" style="left:891px;top:45px;width:2px;height:2px;border-radius:50%;background:#fff;opacity:0.75"></div><div class="abs" style="left:1126px;top:45px;width:3.0px;height:3.0px;border-radius:50%;background:#9ff;opacity:0.54"></div><div class="abs" style="left:1140px;top:57px;width:2px;height:2px;border-radius:50%;background:#f9c;opacity:0.64"></div><div class="abs" style="left:182px;top:58px;width:2px;height:2px;border-radius:50%;background:#f9c;opacity:0.71"></div><div class="abs" style="left:341px;top:60px;width:4px;height:4px;border-radius:50%;background:#fff;opacity:0.63"></div><div class="abs" style="left:84px;top:47px;width:3.0px;height:3.0px;border-radius:50%;background:#fff;opacity:0.60"></div><div class="abs" style="left:363px;top:45px;width:2px;height:2px;border-radius:50%;background:#9ff;opacity:0.36"></div><div class="abs" style="left:1233px;top:61px;width:4px;height:4px;border-radius:50%;background:#9ff;opacity:0.78"></div><div class="abs" style="left:294px;top:53px;width:3.0px;height:3.0px;border-radius:50%;background:#fff;opacity:0.45"></div><div class="abs" style="left:16px;top:56px;width:2px;height:2px;border-radius:50%;background:#9ff;opacity:0.71"></div><div class="abs" style="left:341px;top:56px;width:2px;height:2px;border-radius:50%;background:#f9c;opacity:0.57"></div><div class="abs" style="left:1011px;top:1574px;width:3.0px;height:3.0px;border-radius:50%;background:#fc9;opacity:0.62"></div><div class="abs" style="left:586px;top:1583px;width:3.0px;height:3.0px;border-radius:50%;background:#fc9;opacity:0.42"></div><div class="abs" style="left:677px;top:1599px;width:4px;height:4px;border-radius:50%;background:#fc9;opacity:0.40"></div><div class="abs" style="left:1036px;top:1583px;width:2px;height:2px;border-radius:50%;background:#f9c;opacity:0.50"></div><div class="abs" style="left:42px;top:1587px;width:3.0px;height:3.0px;border-radius:50%;background:#fff;opacity:0.75"></div><div class="abs" style="left:500px;top:1576px;width:3.0px;height:3.0px;border-radius:50%;background:#fff;opacity:0.81"></div><div class="abs" style="left:715px;top:1581px;width:2px;height:2px;border-radius:50%;background:#fc9;opacity:0.58"></div><div class="abs" style="left:1036px;top:1590px;width:2px;height:2px;border-radius:50%;background:#c9f;opacity:0.71"></div><div class="abs" style="left:444px;top:1574px;width:2px;height:2px;border-radius:50%;background:#f9c;opacity:0.65"></div><div class="abs" style="left:119px;top:1582px;width:4px;height:4px;border-radius:50%;background:#fc9;opacity:0.54"></div><div class="abs" style="left:1013px;top:1593px;width:3.0px;height:3.0px;border-radius:50%;background:#f9c;opacity:0.74"></div><div class="abs" style="left:1018px;top:1581px;width:2px;height:2px;border-radius:50%;background:#fc9;opacity:0.45"></div><div class="abs" style="left:1034px;top:1571px;width:4px;height:4px;border-radius:50%;background:#fff;opacity:0.41"></div><div class="abs" style="left:653px;top:1585px;width:4px;height:4px;border-radius:50%;background:#c9f;opacity:0.75"></div><div class="abs" style="left:572px;top:1594px;width:4px;height:4px;border-radius:50%;background:#f9c;opacity:0.86"></div><div class="abs" style="left:683px;top:1594px;width:3.0px;height:3.0px;border-radius:50%;background:#f9c;opacity:0.88"></div><div class="abs" style="left:864px;top:1586px;width:3.0px;height:3.0px;border-radius:50%;background:#f9c;opacity:0.54"></div><div class="abs" style="left:111px;top:1581px;width:4px;height:4px;border-radius:50%;background:#c9f;opacity:0.83"></div><div class="abs" style="left:390px;top:1598px;width:3.0px;height:3.0px;border-radius:50%;background:#fc9;opacity:0.86"></div><div class="abs" style="left:92px;top:1593px;width:4px;height:4px;border-radius:50%;background:#fff;opacity:0.88"></div><div class="abs" style="left:1141px;top:1591px;width:4px;height:4px;border-radius:50%;background:#fc9;opacity:0.70"></div><div class="abs" style="left:614px;top:1573px;width:2px;height:2px;border-radius:50%;background:#c9f;opacity:0.52"></div><div class="abs" style="left:500px;top:1570px;width:3.0px;height:3.0px;border-radius:50%;background:#fc9;opacity:0.59"></div><div class="abs" style="left:1158px;top:1588px;width:3.0px;height:3.0px;border-radius:50%;background:#fff;opacity:0.56"></div><div class="abs" style="left:317px;top:1573px;width:3.0px;height:3.0px;border-radius:50%;background:#fff;opacity:0.55"></div><div class="abs" style="left:2299px;top:1445px;width:2px;height:2px;border-radius:50%;background:#fd9;opacity:0.39"></div><div class="abs" style="left:2259px;top:1470px;width:2px;height:2px;border-radius:50%;background:#f9c;opacity:0.63"></div><div class="abs" style="left:2210px;top:1502px;width:4px;height:4px;border-radius:50%;background:#f9c;opacity:0.59"></div><div class="abs" style="left:2437px;top:1483px;width:3.0px;height:3.0px;border-radius:50%;background:#fff;opacity:0.39"></div><div class="abs" style="left:1513px;top:1437px;width:2px;height:2px;border-radius:50%;background:#f9c;opacity:0.50"></div><div class="abs" style="left:2049px;top:1463px;width:2px;height:2px;border-radius:50%;background:#9cf;opacity:0.51"></div><div class="abs" style="left:2105px;top:1548px;width:2px;height:2px;border-radius:50%;background:#fd9;opacity:0.38"></div><div class="abs" style="left:1449px;top:1519px;width:2px;height:2px;border-radius:50%;background:#fd9;opacity:0.51"></div><div class="abs" style="left:2103px;top:1588px;width:2px;height:2px;border-radius:50%;background:#f9c;opacity:0.80"></div><div class="abs" style="left:2355px;top:1512px;width:2px;height:2px;border-radius:50%;background:#bdf;opacity:0.35"></div><div class="abs" style="left:1416px;top:1488px;width:3.0px;height:3.0px;border-radius:50%;background:#9cf;opacity:0.66"></div><div class="abs" style="left:2013px;top:1506px;width:3.0px;height:3.0px;border-radius:50%;background:#bdf;opacity:0.76"></div><div class="abs" style="left:2190px;top:1587px;width:2px;height:2px;border-radius:50%;background:#9cf;opacity:0.53"></div><div class="abs" style="left:1524px;top:1486px;width:2px;height:2px;border-radius:50%;background:#9cf;opacity:0.58"></div><div class="abs" style="left:1589px;top:1590px;width:4px;height:4px;border-radius:50%;background:#9cf;opacity:0.54"></div><div class="abs" style="left:2535px;top:1594px;width:2px;height:2px;border-radius:50%;background:#fd9;opacity:0.69"></div><div class="abs" style="left:1763px;top:1490px;width:2px;height:2px;border-radius:50%;background:#fff;opacity:0.60"></div><div class="abs" style="left:1292px;top:1568px;width:3.0px;height:3.0px;border-radius:50%;background:#bdf;opacity:0.73"></div><div class="abs" style="left:2455px;top:1496px;width:3.0px;height:3.0px;border-radius:50%;background:#9cf;opacity:0.80"></div><div class="abs" style="left:2013px;top:1482px;width:3.0px;height:3.0px;border-radius:50%;background:#9cf;opacity:0.82"></div><div class="abs" style="left:1941px;top:1440px;width:4px;height:4px;border-radius:50%;background:#fff;opacity:0.84"></div><div class="abs" style="left:2130px;top:1444px;width:3.0px;height:3.0px;border-radius:50%;background:#f9c;opacity:0.83"></div><div class="abs" style="left:1887px;top:1597px;width:4px;height:4px;border-radius:50%;background:#bdf;opacity:0.78"></div><div class="abs" style="left:1390px;top:1492px;width:2px;height:2px;border-radius:50%;background:#bdf;opacity:0.35"></div><div class="abs" style="left:1737px;top:1435px;width:3.0px;height:3.0px;border-radius:50%;background:#fd9;opacity:0.63"></div><div class="abs" style="left:2390px;top:1445px;width:2px;height:2px;border-radius:50%;background:#fd9;opacity:0.45"></div><div class="abs" style="left:1288px;top:1519px;width:3.0px;height:3.0px;border-radius:50%;background:#fd9;opacity:0.65"></div><div class="abs" style="left:1926px;top:1441px;width:4px;height:4px;border-radius:50%;background:#f9c;opacity:0.74"></div><div class="abs" style="left:1832px;top:1532px;width:2px;height:2px;border-radius:50%;background:#fd9;opacity:0.46"></div><div class="abs" style="left:2263px;top:1501px;width:4px;height:4px;border-radius:50%;background:#fd9;opacity:0.81"></div><div class="abs" style="left:1291px;top:1569px;width:2px;height:2px;border-radius:50%;background:#bdf;opacity:0.80"></div><div class="abs" style="left:1662px;top:1464px;width:2px;height:2px;border-radius:50%;background:#bdf;opacity:0.85"></div><div class="abs" style="left:1779px;top:1464px;width:2px;height:2px;border-radius:50%;background:#fff;opacity:0.58"></div><div class="abs" style="left:1275px;top:1538px;width:2px;height:2px;border-radius:50%;background:#9cf;opacity:0.73"></div><div class="abs" style="left:1367px;top:1496px;width:4px;height:4px;border-radius:50%;background:#bdf;opacity:0.79"></div><div class="abs" style="left:2107px;top:1558px;width:4px;height:4px;border-radius:50%;background:#f9c;opacity:0.83"></div><div class="abs" style="left:1862px;top:1511px;width:2px;height:2px;border-radius:50%;background:#f9c;opacity:0.81"></div><div class="abs" style="left:1312px;top:1463px;width:4px;height:4px;border-radius:50%;background:#bdf;opacity:0.39"></div><div class="abs" style="left:2243px;top:1495px;width:2px;height:2px;border-radius:50%;background:#f9c;opacity:0.43"></div><div class="abs" style="left:2426px;top:1582px;width:2px;height:2px;border-radius:50%;background:#9cf;opacity:0.49"></div><div class="abs" style="left:2101px;top:1495px;width:3.0px;height:3.0px;border-radius:50%;background:#f9c;opacity:0.80"></div><div class="abs" style="left:2021px;top:1594px;width:2px;height:2px;border-radius:50%;background:#bdf;opacity:0.83"></div><div class="abs" style="left:1611px;top:1524px;width:4px;height:4px;border-radius:50%;background:#fd9;opacity:0.42"></div><div class="abs" style="left:2129px;top:1441px;width:2px;height:2px;border-radius:50%;background:#fd9;opacity:0.74"></div><div class="abs" style="left:1571px;top:1552px;width:2px;height:2px;border-radius:50%;background:#9cf;opacity:0.75"></div><div class="abs" style="left:2308px;top:1472px;width:4px;height:4px;border-radius:50%;background:#9cf;opacity:0.79"></div><div class="abs" style="left:1990px;top:1506px;width:2px;height:2px;border-radius:50%;background:#fff;opacity:0.68"></div><div class="abs" style="left:2005px;top:1478px;width:4px;height:4px;border-radius:50%;background:#fff;opacity:0.84"></div><div class="abs" style="left:2363px;top:1531px;width:2px;height:2px;border-radius:50%;background:#9cf;opacity:0.67"></div><div class="abs" style="left:2220px;top:1521px;width:4px;height:4px;border-radius:50%;background:#f9c;opacity:0.40"></div><div class="abs" style="left:1657px;top:1525px;width:4px;height:4px;border-radius:50%;background:#fff;opacity:0.42"></div><div class="abs" style="left:1353px;top:1433px;width:2px;height:2px;border-radius:50%;background:#9cf;opacity:0.63"></div><div class="abs" style="left:1349px;top:1447px;width:3.0px;height:3.0px;border-radius:50%;background:#fff;opacity:0.79"></div><div class="abs" style="left:2518px;top:1476px;width:3.0px;height:3.0px;border-radius:50%;background:#bdf;opacity:0.59"></div><div class="abs" style="left:2227px;top:1476px;width:2px;height:2px;border-radius:50%;background:#fd9;opacity:0.66"></div><div class="abs" style="left:1486px;top:1565px;width:3.0px;height:3.0px;border-radius:50%;background:#fd9;opacity:0.65"></div><div class="abs" style="left:2451px;top:1573px;width:2px;height:2px;border-radius:50%;background:#fff;opacity:0.63"></div><div class="abs" style="left:1995px;top:1434px;width:2px;height:2px;border-radius:50%;background:#f9c;opacity:0.70"></div><div class="abs" style="left:1909px;top:1578px;width:2px;height:2px;border-radius:50%;background:#fd9;opacity:0.36"></div><div class="abs" style="left:1423px;top:1553px;width:4px;height:4px;border-radius:50%;background:#bdf;opacity:0.66"></div><div class="abs" style="left:1963px;top:1549px;width:2px;height:2px;border-radius:50%;background:#f9c;opacity:0.71"></div><div class="abs" style="left:1392px;top:1443px;width:4px;height:4px;border-radius:50%;background:#f9c;opacity:0.50"></div><div class="abs" style="left:2421px;top:1553px;width:2px;height:2px;border-radius:50%;background:#fff;opacity:0.83"></div><div class="abs" style="left:1427px;top:1559px;width:3.0px;height:3.0px;border-radius:50%;background:#fff;opacity:0.58"></div><div class="abs" style="left:1274px;top:1559px;width:4px;height:4px;border-radius:50%;background:#bdf;opacity:0.58"></div><div class="abs" style="left:2117px;top:1590px;width:3.0px;height:3.0px;border-radius:50%;background:#bdf;opacity:0.82"></div><div class="abs" style="left:1861px;top:1457px;width:2px;height:2px;border-radius:50%;background:#fd9;opacity:0.67"></div><div class="abs" style="left:2073px;top:1541px;width:2px;height:2px;border-radius:50%;background:#fd9;opacity:0.45"></div><div class="abs" style="left:1491px;top:1516px;width:3.0px;height:3.0px;border-radius:50%;background:#bdf;opacity:0.81"></div><div class="abs" style="left:1831px;top:1527px;width:2px;height:2px;border-radius:50%;background:#bdf;opacity:0.63"></div><div class="abs" style="left:1812px;top:1564px;width:3.0px;height:3.0px;border-radius:50%;background:#9cf;opacity:0.50"></div><div class="abs" style="left:1525px;top:1503px;width:3.0px;height:3.0px;border-radius:50%;background:#9cf;opacity:0.59"></div><div class="abs" style="left:2504px;top:1452px;width:2px;height:2px;border-radius:50%;background:#9cf;opacity:0.52"></div><div class="abs" style="left:2394px;top:1480px;width:2px;height:2px;border-radius:50%;background:#f9c;opacity:0.37"></div><div class="abs" style="left:1767px;top:1539px;width:3.0px;height:3.0px;border-radius:50%;background:#fff;opacity:0.40"></div><div class="abs" style="left:2409px;top:1484px;width:3.0px;height:3.0px;border-radius:50%;background:#fd9;opacity:0.71"></div><div class="abs" style="left:2559px;top:1501px;width:2px;height:2px;border-radius:50%;background:#bdf;opacity:0.50"></div><div class="abs" style="left:1323px;top:1448px;width:4px;height:4px;border-radius:50%;background:#fd9;opacity:0.40"></div><div class="abs" style="left:1364px;top:1503px;width:3.0px;height:3.0px;border-radius:50%;background:#f9c;opacity:0.68"></div><div class="abs" style="left:1688px;top:1493px;width:2px;height:2px;border-radius:50%;background:#9cf;opacity:0.58"></div></div>
<div class="abs" style="left:0;top:43px;width:2560px;height:22px;background:linear-gradient(180deg,rgba(0,0,0,0.28),rgba(0,0,0,0))"></div>
<svg class="abs" style="left:2372px;top:76px" width="130" height="44" viewBox="0 0 130 44"><path d="M8 6 Q8 2 12 2 L40 2 L46 8 L118 8 Q122 8 122 12 L122 44 L8 44 Z" fill="#a9c3da"/><path d="M4 16 Q4 13 7 13 L123 13 Q126 13 126 16 L126 44 L4 44 Z" fill="#b8d0e4"/></svg>
<div class="t" style="left:2518px;top:687px;font-size:23px;font-family:'Liberation Serif',serif;font-weight:bold;color:#e4e4e4;text-shadow:0 2px 3px #000">1</div>
<svg class="abs" style="left:2480px;top:1480px" width="80" height="120"><path d="M20 120 L80 36 M30 120 L80 50 M44 120 L80 70 M10 120 L80 24" stroke="#3fb3b0" stroke-width="1" opacity="0.6"/></svg>
<div id="menubar"><div class="hl"></div>
<svg class="abs" style="left:39px;top:3px" width="33" height="37" viewBox="0 0 33 37"><defs><linearGradient id="ag" x1="0" y1="0" x2="0" y2="1"><stop offset="0" stop-color="#111a22"/><stop offset="0.55" stop-color="#1d2a36"/><stop offset="1" stop-color="#6a7886"/></linearGradient></defs><path d="M23 0c.3 2.6-.8 4.8-2.2 6.3-1.5 1.6-3.6 2.4-5.5 2.2-.3-2.4.9-4.8 2.3-6.200C19.100 .8 21.300 .1 23 0zM30.500 26.600c-.8 1.900-1.300 2.800-2.400 4.500-1.600 2.400-3.800 5.400-6.500 5.400-2.400 0-3-1.600-6.300-1.600s-4 1.600-6.400 1.600C6.200 36.500 4.100 33.800 2.500 31.400-1.900 24.700-.9 16.400 5.100 12.400c1.900-1.300 4.200-2 6.100-2 2.800 0 4.500 1.600 6.800 1.600 2.300 0 3.700-1.600 6.800-1.600 1.700 0 4.100.6 5.900 2.800-5.100 2.800-4.300 10.100.8 13.400z" fill="url(#ag)"/></svg>
<div class="t" style="left:110.0px;top:6.1px;font-size:30px;font-weight:bold;color:#000;letter-spacing:1.15px">ld48–29</div>
<div class="t" style="left:265.0px;top:6.1px;font-size:30px;color:#000;letter-spacing:0.2px">Window</div>
<div class="t" style="left:2255.0px;top:6.1px;font-size:30px;color:#000">Sat 11:58</div>
<svg class="abs" style="left:0;top:0" width="2560" height="43" viewBox="0 0 2560 43" fill="#111"><path d="M1902 6 L1910.5 11.5 L1902 17 L1893.500 11.5 Z M1918 6 L1926.5 11.5 L1918 17 L1909.5 11.5 Z M1902 17 L1910.5 22.5 L1902 28 L1893.5 22.5 Z M1918 17 L1926.5 22.5 L1918 28 L1909.5 22.5 Z M1910 25.5 L1918.5 30.5 L1910 36.5 L1901.5 30.5 Z"/><path d="M1966.5 8 A13.5 13.5 0 1 1 1954.5 27" stroke="#111" stroke-width="3.4" fill="none"/><path d="M1948.5 21 L1960 21 L1953 30.5 Z"/><rect x="1964.5" y="13" width="4.2" height="11"/><rect x="1964.5" y="26" width="4.2" height="4"/><path d="M2025 36 L2025 6 L2032 15 L2019 27 M2019 15 L2032 27 L2025 36" stroke="#111" stroke-width="2.2" fill="none"/><path d="M2066.5 16.5 A30 30 0 0 1 2105.5 16.5" stroke="#111" stroke-width="4" fill="none"/><path d="M2073 24 A19 19 0 0 1 2099 24" stroke="#111" stroke-width="4" fill="none"/><path d="M2079.5 31 A9 9 0 0 1 2092.5 31" stroke="#111" stroke-width="4" fill="none"/><path d="M2081.5 34.5 L2090.5 34.5 L2086 39 Z"/><path d="M2128 17 L2134 17 L2142 10 L2142 34 L2134 27 L2128 27 Z"/><path d="M2191 11 L2220 11 M2191 33 L2220 33" stroke="#111" stroke-width="2.6"/><path d="M2191 11 Q2185.500 11 2185.500 22 Q2185.500 33 2191 33" stroke="#111" stroke-width="2.6" fill="none"/><path d="M2220 10 Q2222 22 2220 34" stroke="#111" stroke-width="2.6" fill="none"/><path d="M2223 17 Q2228 22 2223 27 Z"/><path d="M2195 20 L2203 20 Q2204 14.5 2210 14.5 L2212 14.5 L2212 18 L2216 18 L2216 20.5 L2212 20.5 L2212 23.5 L2216 23.5 L2216 26 L2212 26 L2212 29.500 L2210 29.500 Q2204 29.500 2203 24 L2195 24 Z"/><circle cx="2429.5" cy="18.5" r="9.5" stroke="#111" stroke-width="3.2" fill="none"/><path d="M2436 25.5 L2445 34.5" stroke="#111" stroke-width="4.2"/><rect x="2478" y="8" width="6" height="6" rx="2"/><rect x="2478" y="18" width="6" height="6" rx="2"/><rect x="2478" y="28" width="6" height="6" rx="2"/><rect x="2488" y="8" width="32" height="6" rx="3"/><rect x="2488" y="18" width="28" height="6" rx="3"/><rect x="2488" y="28" width="28" height="6" rx="3"/></svg>
</div>
<div class="win" style="left:1100px;top:700px;width:1297px;height:730px;background:#fff;border-radius:0 0 6px 6px;box-shadow:0 18px 45px rgba(0,0,0,0.45)">
<div class="abs" style="left:0;top:592px;width:1218px;height:112px;background:#e7e7e7;border-radius:0 0 12px 0"></div>
<div class="t" style="left:166.1px;top:483.1px;font-size:30px;color:#151515;letter-spacing:0.6px">d do not take flags for signed integers</div>
</div>
<div class="win" style="left:20px;top:64px;width:1252px;height:1504px;border-radius:8px;background:#3b3b3b;box-shadow:0 22px 60px rgba(0,0,0,0.55),0 0 0 1px rgba(0,0,0,0.3)">
<div class="abs" style="left:0;top:0;width:100%;height:46px;background:linear-gradient(180deg,#fdfdfd 0%,#f1f1f1 50%,#e4e4e4 100%)"></div>
<div class="abs" style="left:0;top:46px;width:100%;height:2px;background:#a9a9a9"></div>
<div class="tl" style="left:16px;top:10px"></div>
<div class="tl" style="left:56px;top:10px"></div>
<div class="tl" style="left:96px;top:10px"></div>
<div class="abs" style="left:24px;top:18px;width:8px;height:8px;border-radius:50%;background:#bdbdbd"></div>
<svg class="abs" style="left:134px;top:8px" width="34" height="28" viewBox="0 0 34 28"><path d="M2 4 Q2 2 4 2 L12 2 L14 4.5 L29 4.5 Q31 4.5 31 6.500 L31 26 L2 26 Z" fill="#b3cadc"/><path d="M1 8 Q1 7 2 7 L32 7 Q33 7 33 8 L32 26 Q32 27 31 27 L3 27 Q2 27 2 26 Z" fill="#c3d7e6" stroke="#a0b8ca" stroke-width="0.8"/></svg>
<div class="t" style="left:175.0px;top:7.9px;font-size:29px;color:#808080">ld48–29 — lloeki@Coriolis: ~/Workspace/projects/ld48–29 — ld48–29 — 88×50</div>
<svg class="abs" style="left:1216px;top:9px" width="28" height="28" viewBox="0 0 28 28"><path d="M13.3 0.5 L27.5 0.5 L27.5 14.5 L23.6 10.7 L22.76 9.86 L19.22 13.4 A3.2 3.2 0 0 1 14.7 8.88 L18.24 5.34 L17.4 4.5 Z M14.7 27.5 L0.5 27.5 L0.5 13.5 L4.4 17.3 L5.24 18.14 L8.78 14.6 A3.2 3.2 0 0 1 13.3 19.12 L9.76 22.66 L10.6 23.5 Z" fill="#c6c6c6"/></svg>
<div class="abs" style="left:0;top:48px;width:100%;height:41px;background:linear-gradient(180deg,#d3d3d3,#d9d9d9)"></div>
<div class="abs" style="left:403px;top:46px;width:397px;height:43px;background:linear-gradient(180deg,#e5e5e5,#e1e1e1);border:2px solid #a9a9a9;border-top:none;border-radius:0 0 7px 7px"></div>
<div class="abs" style="left:1198px;top:48px;width:2px;height:41px;background:#a9a9a9"></div>
<div class="abs" style="left:0;top:88px;width:100%;height:2px;background:#b0b0b0"></div>
<div class="t" style="left:48.0px;top:56.7px;font-size:24.5px;font-weight:bold;color:#7b7b7b">lloeki@Corio…cts/ld48–29</div>
<div class="t" style="left:447.0px;top:56.7px;font-size:24.5px;font-weight:bold;color:#7b7b7b">lloeki@Corio…cts/ld48–29</div>
<div class="t" style="left:844.0px;top:56.7px;font-size:24.5px;font-weight:bold;color:#7b7b7b">lloeki@Corio…cts/ld48–29</div>
<div class="abs term" style="left:0;top:94px;width:100%;height:1400px">
<div class="abs" style="left:10px;top:140px;width:238px;height:28px;background:#262b29"></div>
<div class="abs" style="left:248px;top:140px;width:252px;height:28px;background:#866262"></div>
<div class="abs" style="left:500px;top:140px;width:42px;height:28px;background:#67bd9c"></div>
<svg class="abs" style="left:374px;top:140px" width="24" height="28" viewBox="0 0 24 28"><path d="M1.5 22 H7 L17 6 H21 M10 22 H21" stroke="#fff" stroke-width="2.3" fill="none"/></svg>
<div class="abs" style="left:517px;top:157px;width:5px;height:5px;background:#fff"></div>
<div class="abs" style="left:10px;top:196px;width:238px;height:28px;background:#262b29"></div>
<div class="abs" style="left:248px;top:196px;width:252px;height:28px;background:#866262"></div>
<div class="abs" style="left:500px;top:196px;width:42px;height:28px;background:#67bd9c"></div>
<svg class="abs" style="left:374px;top:196px" width="24" height="28" viewBox="0 0 24 28"><path d="M1.5 22 H7 L17 6 H21 M10 22 H21" stroke="#fff" stroke-width="2.3" fill="none"/></svg>
<div class="abs" style="left:517px;top:213px;width:5px;height:5px;background:#fff"></div>
<div class="abs" style="left:10px;top:224px;width:238px;height:28px;background:#262b29"></div>
<div class="abs" style="left:248px;top:224px;width:252px;height:28px;background:#866262"></div>
<div class="abs" style="left:500px;top:224px;width:42px;height:28px;background:#67bd9c"></div>
<svg class="abs" style="left:374px;top:224px" width="24" height="28" viewBox="0 0 24 28"><path d="M1.5 22 H7 L17 6 H21 M10 22 H21" stroke="#fff" stroke-width="2.3" fill="none"/></svg>
<div class="abs" style="left:517px;top:241px;width:5px;height:5px;background:#fff"></div>
<div class="abs" style="left:10px;top:308px;width:238px;height:28px;background:#262b29"></div>
<div class="abs" style="left:248px;top:308px;width:252px;height:28px;background:#866262"></div>
<div class="abs" style="left:500px;top:308px;width:42px;height:28px;background:#67bd9c"></div>
<svg class="abs" style="left:374px;top:308px" width="24" height="28" viewBox="0 0 24 28"><path d="M1.5 22 H7 L17 6 H21 M10 22 H21" stroke="#fff" stroke-width="2.3" fill="none"/></svg>
<div class="abs" style="left:517px;top:325px;width:5px;height:5px;background:#fff"></div>
<div class="abs" style="left:10px;top:336px;width:238px;height:28px;background:#262b29"></div>
<div class="abs" style="left:248px;top:336px;width:252px;height:28px;background:#866262"></div>
<div class="abs" style="left:500px;top:336px;width:42px;height:28px;background:#67bd9c"></div>
<svg class="abs" style="left:374px;top:336px" width="24" height="28" viewBox="0 0 24 28"><path d="M1.5 22 H7 L17 6 H21 M10 22 H21" stroke="#fff" stroke-width="2.3" fill="none"/></svg>
<div class="abs" style="left:517px;top:353px;width:5px;height:5px;background:#fff"></div>
<div class="abs" style="left:10px;top:840px;width:238px;height:28px;background:#262b29"></div>
<div class="abs" style="left:248px;top:840px;width:252px;height:28px;background:#866262"></div>
<div class="abs" style="left:500px;top:840px;width:42px;height:28px;background:#67bd9c"></div>
<svg class="abs" style="left:374px;top:840px" width="24" height="28" viewBox="0 0 24 28"><path d="M1.5 22 H7 L17 6 H21 M10 22 H21" stroke="#fff" stroke-width="2.3" fill="none"/></svg>
<div class="abs" style="left:517px;top:857px;width:5px;height:5px;background:#fff"></div>
<div class="abs" style="left:10px;top:1344px;width:238px;height:28px;background:#262b29"></div>
<div class="abs" style="left:248px;top:1344px;width:252px;height:28px;background:#866262"></div>
<div class="abs" style="left:500px;top:1344px;width:42px;height:28px;background:#67bd9c"></div>
<svg class="abs" style="left:374px;top:1344px" width="24" height="28" viewBox="0 0 24 28"><path d="M1.5 22 H7 L17 6 H21 M10 22 H21" stroke="#fff" stroke-width="2.3" fill="none"/></svg>
<div class="abs" style="left:517px;top:1361px;width:5px;height:5px;background:#fff"></div>
<div class="row" style="top:2px">        <span class="pk">bin/</span></div>
<div class="row" style="top:30px">        <span class="pk">spritesheet.png</span></div>
<div class="row" style="top:58px">        <span class="pk">tags</span></div>
<div class="row" style="top:114px">no changes added to commit (use &quot;git add&quot; and/or &quot;git commit –a&quot;)</div>
<div class="row" style="top:142px"><span class="wh"> lloeki@Coriolis  ld48–29   master     </span>rf –rf bin</div>
<div class="row" style="top:170px">zsh: command not found: rf</div>
<div class="row" style="top:198px"><span class="wh"> lloeki@Coriolis  ld48–29   master     </span>rm –rf bin</div>
<div class="row" style="top:226px"><span class="wh"> lloeki@Coriolis  ld48–29   master     </span>ls</div>
<div class="row" style="top:254px">README.mdown    log.mdown       spritesheet.png</div>
<div class="row" style="top:282px">ld48–29.go      <span class="bl">pkg</span>             <span class="bl">src</span></div>
<div class="row" style="top:310px"><span class="wh"> lloeki@Coriolis  ld48–29   master     </span>echo bin >> .gitignore</div>
<div class="row" style="top:338px"><span class="wh"> lloeki@Coriolis  ld48–29   master     </span>git status</div>
<div class="row" style="top:366px">On branch master</div>
<div class="row" style="top:394px">Your branch is up–to–date with &#x27;origin/master&#x27;.</div>
<div class="row" style="top:450px">Changes not staged for commit:</div>
<div class="row" style="top:478px">  (use &quot;git add &lt;file&gt;...&quot; to update what will be committed)</div>
<div class="row" style="top:506px">  (use &quot;git checkout –– &lt;file&gt;...&quot; to discard changes in working directory)</div>
<div class="row" style="top:562px">        <span class="pk">modified:   .gitignore</span></div>
<div class="row" style="top:590px">        <span class="pk">modified:   ld48–29.go</span></div>
<div class="row" style="top:618px">        <span class="pk">modified:   log.mdown</span></div>
<div class="row" style="top:674px">Untracked files:</div>
<div class="row" style="top:702px">  (use &quot;git add &lt;file&gt;...&quot; to include in what will be committed)</div>
<div class="row" style="top:758px">        <span class="pk">spritesheet.png</span></div>
<div class="row" style="top:814px">no changes added to commit (use &quot;git add&quot; and/or &quot;git commit –a&quot;)</div>
<div class="row" style="top:842px"><span class="wh"> lloeki@Coriolis  ld48–29   master     </span>git status</div>
<div class="row" style="top:870px">On branch master</div>
<div class="row" style="top:898px">Your branch is up–to–date with &#x27;origin/master&#x27;.</div>
<div class="row" style="top:954px">Changes not staged for commit:</div>
<div class="row" style="top:982px">  (use &quot;git add &lt;file&gt;...&quot; to update what will be committed)</div>
<div class="row" style="top:1010px">  (use &quot;git checkout –– &lt;file&gt;...&quot; to discard changes in working directory)</div>
<div class="row" style="top:1066px">        <span class="pk">modified:   .gitignore</span></div>
<div class="row" style="top:1094px">        <span class="pk">modified:   ld48–29.go</span></div>
<div class="row" style="top:1122px">        <span class="pk">modified:   log.mdown</span></div>
<div class="row" style="top:1178px">Untracked files:</div>
<div class="row" style="top:1206px">  (use &quot;git add &lt;file&gt;...&quot; to include in what will be committed)</div>
<div class="row" style="top:1262px">        <span class="pk">spritesheet.png</span></div>
<div class="row" style="top:1318px">no changes added to commit (use &quot;git add&quot; and/or &quot;git commit –a&quot;)</div>
<div class="row" style="top:1346px"><span class="wh"> lloeki@Coriolis  ld48–29   master     </span>go run ld48–29.go</div>
<div class="abs" style="left:1172px;top:1344px;width:56px;height:28px;background:#262b29"></div>
<div class="row wh" style="left:1186px;top:1346px;font-weight:bold">!≠</div>
<div class="abs" style="left:10px;top:1373px;width:14px;height:27px;border:2px solid #b3aa98"></div>
</div>
</div>
<div class="win" style="left:1644px;top:116px;width:878px;height:1235px;border-radius:8px 8px 5px 5px;background:#fff;box-shadow:0 18px 40px rgba(0,0,0,0.38),0 0 0 1px rgba(0,0,0,0.12)">
<div class="abs" style="left:0;top:0;width:100%;height:70px;background:linear-gradient(180deg,#fcfcfc 0%,#f0f0f0 55%,#e2e2e2 100%)"></div>
<div class="abs" style="left:0;top:70px;width:100%;height:2px;background:#afafaf"></div>
<div class="tl" style="left:16px;top:22px"></div>
<div class="tl" style="left:56px;top:22px"></div>
<div class="tl" style="left:96px;top:22px"></div>
<div class="t" style="left:398.0px;top:20.7px;font-size:28px;color:#7b7b7b">#LD48</div>
<div class="abs" style="left:702px;top:12px;width:164px;height:46px;border:2px solid #b6b6b6;border-radius:7px;background:linear-gradient(180deg,#f5f5f5,#ededed)"></div>
<div class="t" style="left:746.0px;top:23.3px;font-size:22.5px;color:#a9a9a9">Unsave</div>
<div class="t " style="left:273.0px;top:91.6px;font-size:27px;font-weight:bold;color:#5c6064">aking Bug</div>
<div class="t " style="left:416.0px;top:95.5px;font-size:23.5px;color:#8899a6">@GameBreakingBug</div>
<div class="t" style="left:801.3px;top:96.0px;font-size:23.5px;color:#8899a6">13m</div>
<div class="t " style="left:272.3px;top:128.5px;font-size:28.3px;color:#292f33">1st pass at the spritesheet for my <span class="lk">#ld48</span> idea.</div>
<div class="t " style="left:278.9px;top:164.0px;font-size:28.3px;color:#292f33">f Fortress meets Yahtzee! <span class="lk">#gamedev</span></div>
<div class="t " style="left:259.8px;top:200.0px;font-size:28.3px;color:#292f33"><span class="lk">witpic.com/e249ih</span></div>
<div class="sep" style="left:0;top:250px;width:100%"></div>
<div class="t " style="left:282.2px;top:279.5px;font-size:23.5px;color:#8899a6">cepcam</div>
<div class="t" style="left:801.3px;top:280.0px;font-size:23.5px;color:#8899a6">14m</div>
<div class="t " style="left:283.0px;top:309.5px;font-size:28.3px;color:#292f33"><span class="lk">lle</span></div>
<div class="t " style="left:281.6px;top:345.5px;font-size:28.3px;color:#292f33">in ?</div>
<div class="t " style="left:265.9px;top:381.5px;font-size:28.3px;color:#292f33">s : Ludum Dare 29 - The teams at work !</div>
<div class="t " style="left:284.8px;top:416.5px;font-size:28.3px;color:#292f33"><span class="lk">com/compo/ #LD48 #LDPARIS</span></div>
<div class="sep" style="left:0;top:468px;width:100%"></div>
<div class="t " style="left:280.0px;top:493.6px;font-size:27px;font-weight:bold;color:#5c6064">yer</div>
<div class="t " style="left:334.0px;top:497.5px;font-size:23.5px;color:#8899a6">@twistedshield</div>
<div class="t" style="left:801.3px;top:498.0px;font-size:23.5px;color:#8899a6">14m</div>
<div class="t " style="left:288.0px;top:526.5px;font-size:28.3px;color:#292f33">to <span class="lk">#LD48</span>, but making good progress now.</div>
<div class="t " style="left:278.6px;top:562.5px;font-size:28.3px;color:#292f33">work ahead. <span class="lk">#gamedev #1GAM</span></div>
<div class="sep" style="left:0;top:618px;width:100%"></div>
<div class="t " style="left:279.0px;top:646.5px;font-size:23.5px;color:#8899a6">zzybob1998</div>
<div class="t" style="left:801.3px;top:647.0px;font-size:23.5px;color:#8899a6">14m</div>
<div class="t " style="left:281.6px;top:675.5px;font-size:28.3px;color:#292f33">tats done!! <span class="lk">#LD48</span></div>
<svg class="abs" style="left:136px;top:728px;border-radius:0 0 9px 9px" width="714" height="356" viewBox="0 0 714 356"><defs><linearGradient id="pp" x1="0" y1="0" x2="1" y2="0.3"><stop offset="0" stop-color="#c3c7ca"/><stop offset="0.5" stop-color="#cfd2d5"/><stop offset="1" stop-color="#c8cbce"/></linearGradient><linearGradient id="dk" x1="0" y1="0" x2="0" y2="1"><stop offset="0" stop-color="#8f8f85"/><stop offset="0.45" stop-color="#74746b"/><stop offset="0.6" stop-color="#5a5a52"/><stop offset="0.7" stop-color="#2e2e2a"/><stop offset="1" stop-color="#21211e"/></linearGradient><linearGradient id="hl" x1="0" y1="0" x2="1" y2="0"><stop offset="0" stop-color="#c8c8bc" stop-opacity="0"/><stop offset="0.6" stop-color="#c8c8bc" stop-opacity="0.35"/><stop offset="1" stop-color="#c8c8bc" stop-opacity="0.1"/></linearGradient><clipPath id="pc"><rect width="714" height="356" rx="9"/></clipPath></defs><g clip-path="url(#pc)"><rect width="714" height="356" fill="url(#pp)"/><line x1="-12.0" y1="0" x2="-20.0" y2="356" stroke="#bcc0c3" stroke-width="0.8" opacity="0.7"/><line x1="1.5" y1="0" x2="-6.5" y2="356" stroke="#bcc0c3" stroke-width="0.8" opacity="0.7"/><line x1="15.0" y1="0" x2="7.0" y2="356" stroke="#bcc0c3" stroke-width="0.8" opacity="0.7"/><line x1="28.5" y1="0" x2="20.5" y2="356" stroke="#bcc0c3" stroke-width="0.8" opacity="0.7"/><line x1="42.0" y1="0" x2="34.0" y2="356" stroke="#bcc0c3" stroke-width="0.8" opacity="0.7"/><line x1="55.5" y1="0" x2="47.5" y2="356" stroke="#bcc0c3" stroke-width="0.8" opacity="0.7"/><line x1="69.0" y1="0" x2="61.0" y2="356" stroke="#bcc0c3" stroke-width="0.8" opacity="0.7"/><line x1="82.5" y1="0" x2="74.5" y2="356" stroke="#bcc0c3" stroke-width="0.8" opacity="0.7"/><line x1="96.0" y1="0" x2="88.0" y2="356" stroke="#bcc0c3" stroke-width="0.8" opacity="0.7"/><line x1="109.5" y1="0" x2="101.5" y2="356" stroke="#bcc0c3" stroke-width="0.8" opacity="0.7"/><line x1="123.0" y1="0" x2="115.0" y2="356" stroke="#bcc0c3" stroke-width="0.8" opacity="0.7"/><line x1="136.5" y1="0" x2="128.5" y2="356" stroke="#bcc0c3" stroke-width="0.8" opacity="0.7"/><line x1="150.0" y1="0" x2="142.0" y2="356" stroke="#bcc0c3" stroke-width="0.8" opacity="0.7"/><line x1="163.5" y1="0" x2="155.5" y2="356" stroke="#bcc0c3" stroke-width="0.8" opacity="0.7"/><line x1="177.0" y1="0" x2="169.0" y2="356" stroke="#bcc0c3" stroke-width="0.8" opacity="0.7"/><line x1="190.5" y1="0" x2="182.5" y2="356" stroke="#bcc0c3" stroke-width="0.8" opacity="0.7"/><line x1="204.0" y1="0" x2="196.0" y2="356" stroke="#bcc0c3" stroke-width="0.8" opacity="0.7"/><line x1="217.5" y1="0" x2="209.5" y2="356" stroke="#bcc0c3" stroke-width="0.8" opacity="0.7"/><line x1="231.0" y1="0" x2="223.0" y2="356" stroke="#bcc0c3" stroke-width="0.8" opacity="0.7"/><line x1="244.5" y1="0" x2="236.5" y2="356" stroke="#bcc0c3" stroke-width="0.8" opacity="0.7"/><line x1="258.0" y1="0" x2="250.0" y2="356" stroke="#bcc0c3" stroke-width="0.8" opacity="0.7"/><line x1="271.5" y1="0" x2="263.5" y2="356" stroke="#bcc0c3" stroke-width="0.8" opacity="0.7"/><line x1="285.0" y1="0" x2="277.0" y2="356" stroke="#bcc0c3" stroke-width="0.8" opacity="0.7"/><line x1="298.5" y1="0" x2="290.5" y2="356" stroke="#bcc0c3" stroke-width="0.8" opacity="0.7"/><line x1="312.0" y1="0" x2="304.0" y2="356" stroke="#bcc0c3" stroke-width="0.8" opacity="0.7"/><line x1="325.5" y1="0" x2="317.5" y2="356" stroke="#bcc0c3" stroke-width="0.8" opacity="0.7"/><line x1="339.0" y1="0" x2="331.0" y2="356" stroke="#bcc0c3" stroke-width="0.8" opacity="0.7"/><line x1="352.5" y1="0" x2="344.5" y2="356" stroke="#bcc0c3" stroke-width="0.8" opacity="0.7"/><line x1="366.0" y1="0" x2="358.0" y2="356" stroke="#bcc0c3" stroke-width="0.8" opacity="0.7"/><line x1="379.5" y1="0" x2="371.5" y2="356" stroke="#bcc0c3" stroke-width="0.8" opacity="0.7"/><line x1="393.0" y1="0" x2="385.0" y2="356" stroke="#bcc0c3" stroke-width="0.8" opacity="0.7"/><line x1="406.5" y1="0" x2="398.5" y2="356" stroke="#bcc0c3" stroke-width="0.8" opacity="0.7"/><line x1="420.0" y1="0" x2="412.0" y2="356" stroke="#bcc0c3" stroke-width="0.8" opacity="0.7"/><line x1="433.5" y1="0" x2="425.5" y2="356" stroke="#bcc0c3" stroke-width="0.8" opacity="0.7"/><line x1="447.0" y1="0" x2="439.0" y2="356" stroke="#bcc0c3" stroke-width="0.8" opacity="0.7"/><line x1="460.5" y1="0" x2="452.5" y2="356" stroke="#bcc0c3" stroke-width="0.8" opacity="0.7"/><line x1="474.0" y1="0" x2="466.0" y2="356" stroke="#bcc0c3" stroke-width="0.8" opacity="0.7"/><line x1="487.5" y1="0" x2="479.5" y2="356" stroke="#bcc0c3" stroke-width="0.8" opacity="0.7"/><line x1="501.0" y1="0" x2="493.0" y2="356" stroke="#bcc0c3" stroke-width="0.8" opacity="0.7"/><line x1="514.5" y1="0" x2="506.5" y2="356" stroke="#bcc0c3" stroke-width="0.8" opacity="0.7"/><line x1="528.0" y1="0" x2="520.0" y2="356" stroke="#bcc0c3" stroke-width="0.8" opacity="0.7"/><line x1="541.5" y1="0" x2="533.5" y2="356" stroke="#bcc0c3" stroke-width="0.8" opacity="0.7"/><line x1="555.0" y1="0" x2="547.0" y2="356" stroke="#bcc0c3" stroke-width="0.8" opacity="0.7"/><line x1="568.5" y1="0" x2="560.5" y2="356" stroke="#bcc0c3" stroke-width="0.8" opacity="0.7"/><line x1="582.0" y1="0" x2="574.0" y2="356" stroke="#bcc0c3" stroke-width="0.8" opacity="0.7"/><line x1="595.5" y1="0" x2="587.5" y2="356" stroke="#bcc0c3" stroke-width="0.8" opacity="0.7"/><line x1="609.0" y1="0" x2="601.0" y2="356" stroke="#bcc0c3" stroke-width="0.8" opacity="0.7"/><line x1="622.5" y1="0" x2="614.5" y2="356" stroke="#bcc0c3" stroke-width="0.8" opacity="0.7"/><line x1="636.0" y1="0" x2="628.0" y2="356" stroke="#bcc0c3" stroke-width="0.8" opacity="0.7"/><line x1="649.5" y1="0" x2="641.5" y2="356" stroke="#bcc0c3" stroke-width="0.8" opacity="0.7"/><line x1="663.0" y1="0" x2="655.0" y2="356" stroke="#bcc0c3" stroke-width="0.8" opacity="0.7"/><line x1="676.5" y1="0" x2="668.5" y2="356" stroke="#bcc0c3" stroke-width="0.8" opacity="0.7"/><line x1="690.0" y1="0" x2="682.0" y2="356" stroke="#bcc0c3" stroke-width="0.8" opacity="0.7"/><line x1="703.5" y1="0" x2="695.5" y2="356" stroke="#bcc0c3" stroke-width="0.8" opacity="0.7"/><line x1="717.0" y1="0" x2="709.0" y2="356" stroke="#bcc0c3" stroke-width="0.8" opacity="0.7"/><line x1="730.5" y1="0" x2="722.5" y2="356" stroke="#bcc0c3" stroke-width="0.8" opacity="0.7"/><line x1="744.0" y1="0" x2="736.0" y2="356" stroke="#bcc0c3" stroke-width="0.8" opacity="0.7"/><line x1="757.5" y1="0" x2="749.5" y2="356" stroke="#bcc0c3" stroke-width="0.8" opacity="0.7"/><line x1="771.0" y1="0" x2="763.0" y2="356" stroke="#bcc0c3" stroke-width="0.8" opacity="0.7"/><line x1="784.5" y1="0" x2="776.5" y2="356" stroke="#bcc0c3" stroke-width="0.8" opacity="0.7"/><line x1="0" y1="34" x2="600" y2="30" stroke="#b9bdc0" stroke-width="1.5"/><path d="M214 0 L192 356" stroke="#55585a" stroke-width="2.2"/><path d="M396 0 L404 356" stroke="#55585a" stroke-width="2.2"/><path d="M0 146 Q300 140 604 137" stroke="#5a5d60" stroke-width="2"/><text x="277" y="22" font-family="Liberation Serif" font-style="italic" font-size="18" fill="#5d6063" opacity="0.75" letter-spacing="1" transform="rotate(-1.5 277 10)">Alan</text><text x="277" y="36" font-family="Liberation Serif" font-style="italic" font-size="18" fill="#5d6063" opacity="0.75" letter-spacing="1" transform="rotate(-1.5 277 24)">Turing</text><text x="240" y="58" font-family="Liberation Serif" font-style="italic" font-size="18" fill="#5d6063" opacity="0.75" letter-spacing="1" transform="rotate(-1.5 240 46)">— +enemy warning</text><text x="240" y="80" font-family="Liberation Serif" font-style="italic" font-size="18" fill="#5d6063" opacity="0.75" letter-spacing="1" transform="rotate(-1.5 240 68)">— All round nice guy</text><text x="238" y="101" font-family="Liberation Serif" font-style="italic" font-size="18" fill="#5d6063" opacity="0.75" letter-spacing="1" transform="rotate(-1.5 238 89)">— Problem solver</text><text x="438" y="27" font-family="Liberation Serif" font-style="italic" font-size="18" fill="#5d6063" opacity="0.75" letter-spacing="1" transform="rotate(-1.5 438 15)">Ronaldo</text><text x="415" y="44" font-family="Liberation Serif" font-style="italic" font-size="18" fill="#5d6063" opacity="0.75" letter-spacing="1" transform="rotate(-1.5 415 32)">— + Accuracy</text><text x="418" y="65" font-family="Liberation Serif" font-style="italic" font-size="18" fill="#5d6063" opacity="0.75" letter-spacing="1" transform="rotate(-1.5 418 53)">— has big ear rings</text><text x="420" y="85" font-family="Liberation Serif" font-style="italic" font-size="18" fill="#5d6063" opacity="0.75" letter-spacing="1" transform="rotate(-1.5 420 73)">— likes to celebrate</text><text x="277" y="163" font-family="Liberation Serif" font-style="italic" font-size="18" fill="#5d6063" opacity="0.75" letter-spacing="1" transform="rotate(-1.5 277 151)">Mo</text><text x="276" y="178" font-family="Liberation Serif" font-style="italic" font-size="18" fill="#5d6063" opacity="0.75" letter-spacing="1" transform="rotate(-1.5 276 166)">Farah</text><text x="232" y="203" font-family="Liberation Serif" font-style="italic" font-size="18" fill="#5d6063" opacity="0.75" letter-spacing="1" transform="rotate(-1.5 232 191)">—  Fuel econorey</text><text x="234" y="239" font-family="Liberation Serif" font-style="italic" font-size="18" fill="#5d6063" opacity="0.75" letter-spacing="1" transform="rotate(-1.5 234 227)">—  too  modest</text><text x="227" y="274" font-family="Liberation Serif" font-style="italic" font-size="18" fill="#5d6063" opacity="0.75" letter-spacing="1" transform="rotate(-1.5 227 262)">—  likes  to  attempt</text><text x="261" y="302" font-family="Liberation Serif" font-style="italic" font-size="18" fill="#5d6063" opacity="0.75" letter-spacing="1" transform="rotate(-1.5 261 290)">bigger challenges</text><text x="451" y="169" font-family="Liberation Serif" font-style="italic" font-size="18" fill="#5d6063" opacity="0.75" letter-spacing="1" transform="rotate(-1.5 451 157)">Chewbaca</text><text x="422" y="194" font-family="Liberation Serif" font-style="italic" font-size="18" fill="#5d6063" opacity="0.75" letter-spacing="1" transform="rotate(-1.5 422 182)">— + Defence</text><text x="423" y="224" font-family="Liberation Serif" font-style="italic" font-size="18" fill="#5d6063" opacity="0.75" letter-spacing="1" transform="rotate(-1.5 423 212)">— can&#x27;t communicate</text><text x="447" y="249" font-family="Liberation Serif" font-style="italic" font-size="18" fill="#5d6063" opacity="0.75" letter-spacing="1" transform="rotate(-1.5 447 237)">with other crew</text><text x="424" y="271" font-family="Liberation Serif" font-style="italic" font-size="18" fill="#5d6063" opacity="0.75" letter-spacing="1" transform="rotate(-1.5 424 259)">— is  a  Wookie</text><text x="453" y="315" font-family="Liberation Serif" font-style="italic" font-size="18" fill="#5d6063" opacity="0.75" letter-spacing="1" transform="rotate(-1.5 453 303)">Prone  to  angry  out</text><text x="458" y="341" font-family="Liberation Serif" font-style="italic" font-size="18" fill="#5d6063" opacity="0.75" letter-spacing="1" transform="rotate(-1.5 458 329)">bursts.</text><text x="140" y="58" font-family="Liberation Serif" font-style="italic" font-size="18" fill="#5d6063" opacity="0.75" letter-spacing="1" transform="rotate(-1.5 140 46)">damage</text><text x="140" y="82" font-family="Liberation Serif" font-style="italic" font-size="18" fill="#5d6063" opacity="0.75" letter-spacing="1" transform="rotate(-1.5 140 70)">man</text><text x="140" y="108" font-family="Liberation Serif" font-style="italic" font-size="18" fill="#5d6063" opacity="0.75" letter-spacing="1" transform="rotate(-1.5 140 96)">rates</text><text x="140" y="316" font-family="Liberation Serif" font-style="italic" font-size="18" fill="#5d6063" opacity="0.75" letter-spacing="1" transform="rotate(-1.5 140 304)">a beast</text><path d="M446 276 L562 270 M445 286 L566 280" stroke="#4d5053" stroke-width="2"/><path d="M593 0 Q640 150 672 356 L714 356 L714 0 Z" fill="url(#dk)"/><path d="M650 0 L714 0 L714 220 L650 220 Z" fill="url(#hl)"/><path d="M700 0 L714 0 L714 20 Z" fill="#d8d8c8" opacity="0.8"/></g></svg>
<div class="sep" style="left:0;top:1111px;width:100%"></div>
<svg class="abs" style="left:33px;top:1143px" width="71.8" height="85.8" viewBox="0 0 10 12" shape-rendering="crispEdges"><rect x="3" y="0" width="5" height="1" fill="#000"/><rect x="2" y="1" width="7" height="1" fill="#000"/><rect x="1" y="2" width="9" height="10" fill="#000"/><rect x="3" y="0" width="1" height="1" fill="#202020"/><rect x="2" y="1" width="1" height="1" fill="#202020"/><rect x="1" y="2" width="1" height="9" fill="#222"/><rect x="3" y="3" width="1" height="1" fill="#eee"/><rect x="6" y="3" width="1" height="1" fill="#f4f4f4"/><rect x="2" y="4" width="3" height="1" fill="#ebc02c"/><rect x="3" y="6" width="3" height="1" fill="#f6f6f6"/><rect x="5" y="6" width="1" height="1" fill="#dedede"/><rect x="7" y="6" width="1" height="2" fill="#3a3a3a"/><rect x="2" y="7" width="5" height="4" fill="#fdfdfd"/><rect x="6" y="7" width="1" height="4" fill="#e2e2e2"/><rect x="8" y="8" width="1" height="1" fill="#3a3a3a"/><rect x="0" y="11" width="2" height="1" fill="#f7c82a"/><rect x="2" y="11" width="3" height="1" fill="#fff"/><rect x="5" y="11" width="2" height="1" fill="#f7c82a"/></svg>
<div class="t " style="left:136.0px;top:1138.6px;font-size:27px;font-weight:bold;color:#5c6064">penny g</div>
<div class="t " style="left:254.7px;top:1142.5px;font-size:23.5px;color:#8899a6">@karabaos</div>
<div class="t" style="left:801.3px;top:1143.0px;font-size:23.5px;color:#8899a6">15m</div>
<div class="t " style="left:136.0px;top:1173.5px;font-size:28.3px;color:#292f33">Ludum Dare game idea: an artsy text based game about</div>
<div class="t " style="left:136.0px;top:1208.5px;font-size:28.3px;color:#292f33">religious institutions. <span class="lk">#gamedev #LD48</span></div>
<div class="abs" style="left:858px;top:186px;width:15px;height:34px;border-radius:8px;background:#c9c9c9"></div>
</div>
<div class="win" style="left:644px;top:182px;width:1280px;height:1003px;border-radius:6px 6px 3px 3px;background:#000080;box-shadow:0 45px 120px 5px rgba(0,0,0,0.8),0 14px 36px rgba(0,0,0,0.5),0 0 0 1px rgba(0,0,0,0.35)">
<div class="abs" style="left:0;top:0;width:100%;height:42px;background:linear-gradient(180deg,#f4f4f4 0%,#e4e4e4 10%,#d5d5d5 55%,#c4c4c4 100%)"></div>
<div class="abs" style="left:0;top:42px;width:100%;height:2px;background:#6e6e6e"></div>
<div class="abs" style="left:16px;top:10px;width:24px;height:24px;border-radius:50%;border:1.6px solid #45505a;background:radial-gradient(ellipse 62% 42% at 50% 82%, #dfe4ea 0%, rgba(200,210,218,0) 100%),radial-gradient(ellipse 50% 22% at 50% 14%, #f2f7f7 0%, rgba(160,180,190,0) 100%),linear-gradient(180deg,#a2b2bd 0%,#8b9dab 50%,#b8c4cd 100%);box-shadow:0 1px 1px rgba(255,255,255,0.6)"></div>
<div class="abs" style="left:56px;top:10px;width:24px;height:24px;border-radius:50%;border:1.6px solid #45505a;background:radial-gradient(ellipse 62% 42% at 50% 82%, #dfe4ea 0%, rgba(200,210,218,0) 100%),radial-gradient(ellipse 50% 22% at 50% 14%, #f2f7f7 0%, rgba(160,180,190,0) 100%),linear-gradient(180deg,#a2b2bd 0%,#8b9dab 50%,#b8c4cd 100%);box-shadow:0 1px 1px rgba(255,255,255,0.6)"></div>
<div class="abs" style="left:96px;top:10px;width:24px;height:24px;border-radius:50%;border:1.6px solid #45505a;background:radial-gradient(ellipse 62% 42% at 50% 82%, #dfe4ea 0%, rgba(200,210,218,0) 100%),radial-gradient(ellipse 50% 22% at 50% 14%, #f2f7f7 0%, rgba(160,180,190,0) 100%),linear-gradient(180deg,#a2b2bd 0%,#8b9dab 50%,#b8c4cd 100%);box-shadow:0 1px 1px rgba(255,255,255,0.6)"></div>
<div class="t" style="left:581.2px;top:7.9px;font-size:29px;color:#2e2e2e">LD48–29</div>
<svg class="abs" style="left:1244px;top:9px" width="28" height="28" viewBox="0 0 28 28"><path d="M13.3 0.5 L27.5 0.5 L27.5 14.5 L23.6 10.7 L22.76 9.86 L19.22 13.4 A3.2 3.2 0 0 1 14.7 8.88 L18.24 5.34 L17.4 4.5 Z M14.7 27.5 L0.5 27.5 L0.5 13.5 L4.4 17.3 L5.24 18.14 L8.78 14.6 A3.2 3.2 0 0 1 13.3 19.12 L9.76 22.66 L10.6 23.5 Z" fill="#979797" stroke="#7c7c7c" stroke-width="0.8"/></svg>
<svg class="abs" style="left:320px;top:284px" width="640" height="480" shape-rendering="crispEdges"><defs><pattern id="tile" x="0" y="0" width="160" height="120" patternUnits="userSpaceOnUse"><rect width="160" height="120" fill="#c94812"/><g fill="#6a9b40"><rect x="0" y="0" width="5" height="120"/><rect x="0" y="0" width="160" height="4"/><rect x="80" y="49" width="5" height="26"/><rect x="65" y="60" width="35" height="4"/><rect x="80" y="0" width="5" height="15"/><rect x="80" y="109" width="5" height="11"/><rect x="0" y="60" width="20" height="4"/><rect x="145" y="60" width="15" height="4"/></g></pattern></defs><rect width="640" height="480" fill="url(#tile)"/></svg>
</div>
</body></html>
